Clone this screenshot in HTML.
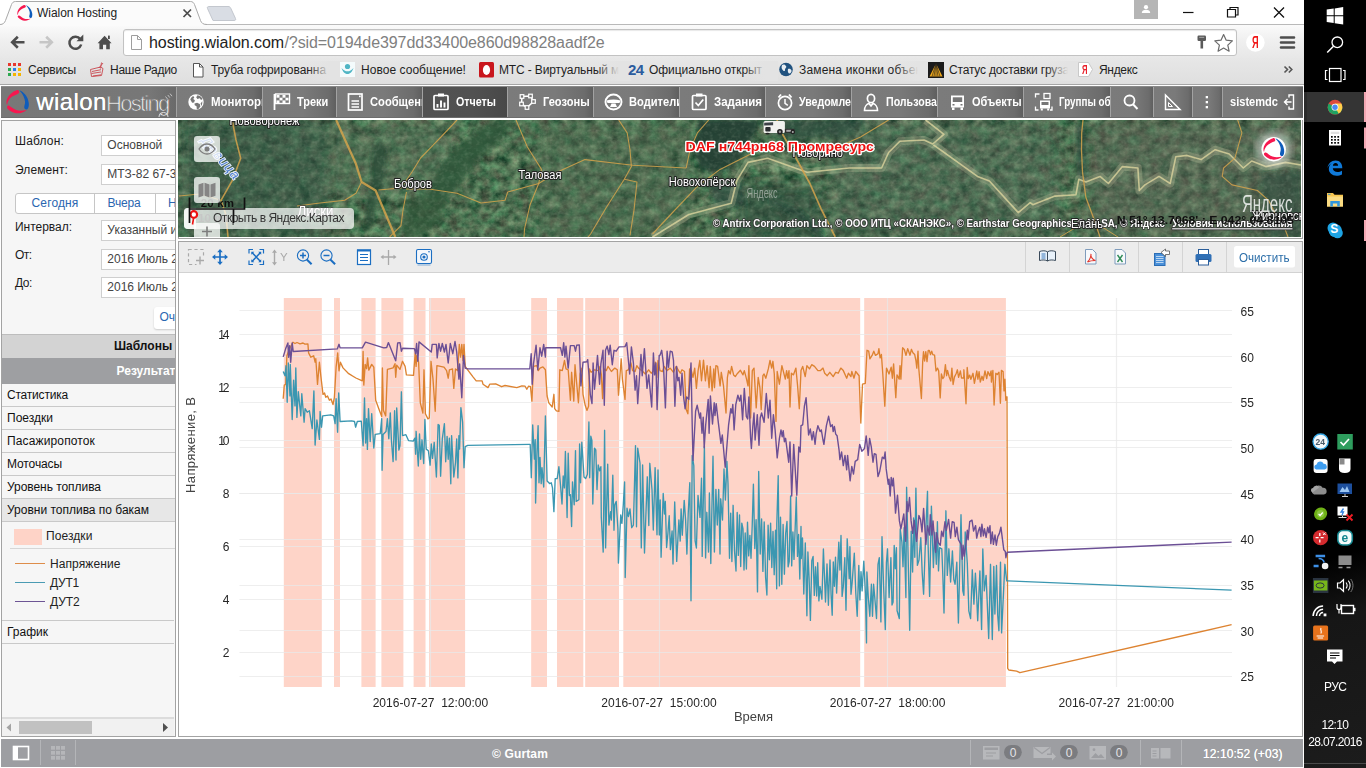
<!DOCTYPE html>
<html lang="ru">
<head>
<meta charset="utf-8">
<title>Wialon Hosting</title>
<style>
*{box-sizing:border-box;margin:0;padding:0}
html,body{width:1366px;height:768px;overflow:hidden;background:#fff}
body{position:relative;font-family:"Liberation Sans",sans-serif;font-size:12px;color:#222}
.a{position:absolute}
.t{position:absolute;white-space:pre}
svg{position:absolute;overflow:visible}

#tabstrip{left:0;top:0;width:1304px;height:25px;background:#fff}
#toolbar{left:0;top:24px;width:1304px;height:35px;background:linear-gradient(#fbfbfb,#f0f0f0 45%,#e7e7e7)}
#bookmarks{left:0;top:58px;width:1304px;height:27px;background:linear-gradient(#e7e7e7,#dfdfdf);border-bottom:1px solid #a6a6a6}
#urlbar{left:123px;top:29px;width:1114px;height:27px;background:#fff;border:1px solid #c2c2c2;border-radius:3px;box-shadow:inset 0 1px 1px #e8e8e8}

#nav{left:1px;top:86px;width:1302px;height:32px;background:#767676;border-top:1px solid #8a8a8a;border-bottom:1px solid #6d6d6d}
.ni{top:87px;height:30px;overflow:hidden;background:linear-gradient(90deg,#7b7b7b,#7a7a7a 55%,#6c6c6c 90%,#5f5f5f);border-left:1px solid #a2a2a2}
.ni.act{background:linear-gradient(90deg,#525252,#515151 60%,#484848)}
.ni .t{color:#fff;font-weight:bold;top:8px;font-size:12px;line-height:15px}
.ni svg{left:0;top:0}

#left{left:1px;top:120px;width:175px;height:617px;background:#f6f6f6;border:1px solid #a3a3a3;overflow:hidden}
#left .inp{position:absolute;left:99px;width:90px;height:21px;background:#fff;border:1px solid #cfcfcf}
#left .row{position:absolute;left:0;width:173px;height:23px;border-bottom:1px solid #c9c9c9}

#mpanel{left:178px;top:120px;width:1125px;height:119px;background:#fff;border:1px solid #a3a3a3;border-top:none}
.mbtn{position:absolute;left:194px;width:26px;height:26px;border-radius:3px;background:rgba(255,255,255,.76)}

#cpanel{left:178px;top:241px;width:1125px;height:496px;background:#fff;border:1px solid #a3a3a3}
#ctool{left:179px;top:242px;width:1123px;height:31px;background:#ececec;border-bottom:1px solid #d2d2d2}

#bbar{left:1px;top:739px;width:1302px;height:28px;background:#9d9ea2}

#taskbar{left:1304px;top:0;width:62px;height:768px;background:linear-gradient(165deg,#000 0,#000 72%,#161616 80%,#1c1c1c 100%)}
</style>
</head>
<body>
<div id="tabstrip" class="a"></div><div id="toolbar" class="a"></div><div id="bookmarks" class="a"></div><div id="urlbar" class="a"></div>
<svg style="left:0;top:0" width="1304" height="26" viewBox="0 0 1304 26"><path d="M213 20.500L207.500 8.500C207 7.300 207.500 6.500 208.800 6.500L228 6.500C229.500 6.500 230.200 7 230.800 8.300L235.500 18.500C236 19.800 235.500 20.500 234 20.500Z" fill="#d9dde4" stroke="#c3c7ce" stroke-width="1"/><path d="M0 24.500L1304 24.500" stroke="#b9b9b9" stroke-width="1" fill="none"/><path d="M0 24.500C3 24.500 4.500 23 5.500 20.500L11.500 4.500C12.300 2.500 13.500 1.500 15.500 1.500L190.500 1.500C192.500 1.500 193.700 2.500 194.500 4.500L200.500 20.500C201.500 23 203 24.500 207 24.500L207 26L0 26Z" fill="#fbfbfb" stroke="none"/><path d="M0 24.500C3 24.500 4.500 23 5.500 20.500L11.500 4.500C12.300 2.500 13.500 1.500 15.500 1.500L190.500 1.500C192.500 1.500 193.700 2.500 194.500 4.500L200.500 20.500C201.500 23 203 24.500 207 24.500" fill="none" stroke="#a9a9a9" stroke-width="1"/><path d="M183.500 9.500l7.500 7.500m0-7.500l-7.500 7.500" stroke="#4a4a4a" stroke-width="1.700" fill="none"/><path d="M1183 12.500h10.500" stroke="#111" stroke-width="1.200" fill="none"/><path d="M1227.500 9.500h8v7.500h-8zM1230 9.500v-2h8v7.500h-2.300" stroke="#111" stroke-width="1.200" fill="none"/><path d="M1274 7.500l10 10m0-10l-10 10" stroke="#111" stroke-width="1.300" fill="none"/><rect x="1134" y="0" width="24" height="19" fill="#b5b5b5"/><circle cx="1146" cy="7.200" r="2.100" fill="#fff"/><path d="M1141.800 13c0-2.300 1.800-3.300 4.200-3.300s4.200 1 4.200 3.300z" fill="#fff"/></svg>
<svg style="left:17px;top:4.5px" width="15.84" height="15.84" viewBox="0 0 24 24"><path d="M11 .15C7 1.200 1.500 5.500.55 11.200C.4 12.500.5 13.800.8 14.800L1.300 14.800C1.600 11 4.500 7.500 7.300 6.200C9 5.300 10.500 4.600 11.500 4.200C13 3.600 13.800 3 13.300 1.600C12.900.5 12 0 11 .15Z" fill="#f7174f"/><path d="M13.600.25C16 1.300 18 2.800 19.300 4.400C21 6.500 22 8.500 22.400 10.100C23 12 23.300 13.500 23.200 14.800C23.200 16.500 22.900 17.600 22.400 18.500C21.900 19.500 21.200 19.900 20.600 19.800C19.300 19.500 18.500 18.500 18.500 17.400C18.500 16.200 19.100 15 19.300 13.800C19.500 12.200 19.300 10.600 18.800 9.100C18.300 7.400 17.600 5.800 16.700 4.400C15.900 3.100 15 2 14.100 1Z" fill="#0f5cbb"/><path d="M1.100 16.900C1.400 16.200 2.300 15.700 3.150 15.900C4.300 16.300 5.200 17.300 6.300 18C7.600 19 9 19.800 10.400 20.300C12 20.900 13.600 21.100 15.100 21.100C17 21.100 19 20.800 20.900 20.300C20 21.300 18.900 21.900 17.700 22.400C16 23.200 14 23.700 12 23.700C10 23.700 8 23.300 6.300 22.400C4.600 21.700 3.200 20.700 2.100 19.500C1.300 18.700.9 17.700 1.100 16.900Z" fill="#f7174f"/></svg>
<span class="t" style="left:37px;top:5px;font-size:12px;line-height:16px;color:#222;letter-spacing:-0.050px;">Wialon Hosting</span>
<svg style="left:0;top:24px" width="1304" height="36" viewBox="0 24 1304 36"><path d="M24.500 42.300H12.500M17.800 36.800L12.200 42.300L17.800 47.800" stroke="#4d4d4d" stroke-width="2.600" fill="none" stroke-linejoin="miter"/><path d="M39.500 42.300H51.500M46.200 36.800L51.800 42.300L46.200 47.800" stroke="#c6c6c6" stroke-width="2.600" fill="none"/><path d="M80.300 39.200A6 6 0 1 0 81.200 44.500" stroke="#4d4d4d" stroke-width="2.500" fill="none"/><path d="M76.500 41.200L83.300 41.200L83.300 34.500Z" fill="#4d4d4d"/><path d="M97.600 43.200L104.600 35.700L111.600 43.200L109.800 43.200L109.800 49.200L106.200 49.200L106.200 44.700L103 44.700L103 49.200L99.400 49.200L99.400 43.200Z" fill="#4d4d4d"/><rect x="108" y="35.600" width="1.800" height="3.400" fill="#4d4d4d"/><path d="M131.500 35.500h6l4 4v10h-10z" fill="#fdfdfd" stroke="#9d9d9d" stroke-width="1"/><path d="M137.500 35.500v4h4" fill="none" stroke="#9d9d9d" stroke-width="1"/><rect x="1197.500" y="35.500" width="8.500" height="5.500" rx="1.200" fill="#5a5a5a"/><rect x="1200.500" y="41" width="2.600" height="7.500" fill="#5a5a5a"/><rect x="1199.200" y="36.800" width="5" height="1.200" fill="#9a9a9a"/><path d="M1223.600 34.500l2.600 5.700 6.200.7-4.600 4.200 1.300 6.100-5.500-3.100-5.500 3.100 1.300-6.100-4.600-4.200 6.200-.7z" fill="#fff" stroke="#6a6a6a" stroke-width="1.200" stroke-linejoin="round"/><circle cx="1255.400" cy="42.500" r="9.300" fill="#fff"/><path d="M1281 37.500h13M1281 42.500h13M1281 47.500h13" stroke="#4d4d4d" stroke-width="2.600" stroke-linecap="round" fill="none"/></svg>
<span class="t" style="left:1252.2px;top:33px;font-size:16px;line-height:19px;color:#f01818;font-weight:bold;transform:scaleX(0.5739);transform-origin:0 0;">Я</span>
<span class="t" style="left:149px;top:32.5px;font-size:16px;line-height:20px;color:#222;letter-spacing:-0.060px;">hosting.wialon.com</span>
<span class="t" style="left:284.5px;top:32.5px;font-size:16px;line-height:20px;color:#808080;letter-spacing:-0.090px;">/?sid=0194de397dd33400e860d98828aadf2e</span>
<span class="t" style="left:28px;top:62px;font-size:12px;line-height:16px;color:#1f1f1f;letter-spacing:-0.246px;">Сервисы</span>
<span class="t" style="left:110px;top:62px;font-size:12px;line-height:16px;color:#1f1f1f;letter-spacing:-0.264px;">Наше Радио</span>
<span class="t" style="left:211px;top:62px;font-size:12px;line-height:16px;color:#1f1f1f;letter-spacing:-0.065px;">Труба гофрированна</span>
<span class="t" style="left:361px;top:62px;font-size:12px;line-height:16px;color:#1f1f1f;letter-spacing:0.039px;">Новое сообщение!</span>
<span class="t" style="left:499px;top:62px;font-size:12px;line-height:16px;color:#1f1f1f;letter-spacing:-0.145px;">МТС - Виртуальный м</span>
<span class="t" style="left:649px;top:62px;font-size:12px;line-height:16px;color:#1f1f1f;letter-spacing:-0.059px;">Официально открыт</span>
<span class="t" style="left:799px;top:62px;font-size:12px;line-height:16px;color:#1f1f1f;letter-spacing:0.172px;">Замена иконки объек</span>
<span class="t" style="left:949px;top:62px;font-size:12px;line-height:16px;color:#1f1f1f;letter-spacing:-0.178px;">Статус доставки груза</span>
<span class="t" style="left:1099px;top:62px;font-size:12px;line-height:16px;color:#1f1f1f;letter-spacing:-0.310px;">Яндекс</span>
<div class="a" style="left:308px;top:61px;width:34px;height:20px;background:linear-gradient(90deg,rgba(227,227,227,0),#e3e3e3 65%)"></div>
<div class="a" style="left:597px;top:61px;width:34px;height:20px;background:linear-gradient(90deg,rgba(227,227,227,0),#e3e3e3 65%)"></div>
<div class="a" style="left:744px;top:61px;width:34px;height:20px;background:linear-gradient(90deg,rgba(227,227,227,0),#e3e3e3 65%)"></div>
<div class="a" style="left:896px;top:61px;width:34px;height:20px;background:linear-gradient(90deg,rgba(227,227,227,0),#e3e3e3 65%)"></div>
<div class="a" style="left:1046px;top:61px;width:34px;height:20px;background:linear-gradient(90deg,rgba(227,227,227,0),#e3e3e3 65%)"></div>
<svg style="left:0;top:58px" width="1304" height="28" viewBox="0 58 1304 28"><rect x="8" y="63" width="3" height="3" fill="#e8372c"/><rect x="13" y="63" width="3" height="3" fill="#e8372c"/><rect x="18" y="63" width="3" height="3" fill="#e8372c"/><rect x="8" y="68" width="3" height="3" fill="#2da94f"/><rect x="13" y="68" width="3" height="3" fill="#2b7de9"/><rect x="18" y="68" width="3" height="3" fill="#f4b400"/><rect x="8" y="73" width="3" height="3" fill="#2da94f"/><rect x="13" y="73" width="3" height="3" fill="#f4b400"/><rect x="18" y="73" width="3" height="3" fill="#f4b400"/><path d="M90.500 69.500l10-2.500 2.500 1.500-1.500 7-10 1zM92 71.500l9-1.800M91.500 73.500l9.500-1.500M93 76l8-1.200M99 68l4-5M101.500 62.500l-1 6" stroke="#c8474e" stroke-width="0.900" fill="none"/><path d="M193.500 63.500h6l3.500 3.500v10h-9.500z" fill="#fff" stroke="#555" stroke-width="1"/><path d="M199.500 63.500v3.500h3.500" fill="none" stroke="#555" stroke-width="1"/><rect x="340" y="62" width="15" height="15" fill="#f4fbfc"/><circle cx="347.500" cy="66.500" r="2.600" fill="#4fb5c4"/><path d="M341.500 68c1.500 4.500 4 6 6 6s4.500-1.500 6-6c-2 2.500-4 3.300-6 3.300s-4-.8-6-3.300z" fill="#4fb5c4"/><rect x="479" y="62" width="15" height="15.500" rx="1.500" fill="#c9161d"/><ellipse cx="486.500" cy="70" rx="3.600" ry="5" fill="#fff"/><circle cx="786" cy="69.500" r="6.800" fill="#21527f"/><path d="M782 65c2-1 3-.5 4 1s-1 2-1 4-2 1-3-1 0-3 0-4zM788 69c1.500-.5 3 0 3.500 1.500s-1.500 3.500-2.500 3-1.500-3-1-4.500z" fill="#e9eef2"/><rect x="928" y="62" width="16" height="16" fill="#1b1b1b"/><path d="M929.500 76.500l6.500-13 6.500 13z" fill="#f0a81c"/><path d="M936 63.500l-4 13M936 63.500l4 13M936 63.500v13M936 63.500l-2 13M936 63.500l2 13" stroke="#1b1b1b" stroke-width="0.600"/><path d="M1078.500 62.500h10l4 7-4 7h-10z" fill="#fff" stroke="#c9c9c9" stroke-width="1"/><path d="M1284.500 66.500l3 3-3 3M1288.800 66.500l3 3-3 3" stroke="#555" stroke-width="1.600" fill="none"/></svg>
<span class="t" style="left:1081.5px;top:61.5px;font-size:13px;line-height:16px;color:#e8202a;font-weight:bold;transform:scaleX(0.5886);transform-origin:0 0;">Я</span>
<span class="t" style="left:628px;top:60.5px;font-size:15px;line-height:18px;color:#2b5c9e;font-weight:bold;letter-spacing:-0.594px;">24</span>
<div id="nav" class="a"></div>
<div class="a" style="left:1px;top:87px;width:175px;height:30px;background:linear-gradient(90deg,#787878,#777 85%,#6a6a6a)"></div>
<svg style="left:5.7px;top:90px" width="23.64" height="23.64" viewBox="0 0 24 24"><path d="M11 .15C7 1.200 1.500 5.500.55 11.200C.4 12.500.5 13.800.8 14.800L1.300 14.800C1.600 11 4.500 7.500 7.300 6.200C9 5.300 10.500 4.600 11.500 4.200C13 3.600 13.800 3 13.300 1.600C12.900.5 12 0 11 .15Z" fill="#f7174f"/><path d="M13.600.25C16 1.300 18 2.800 19.300 4.400C21 6.500 22 8.500 22.400 10.100C23 12 23.300 13.500 23.200 14.800C23.200 16.500 22.900 17.600 22.400 18.500C21.900 19.500 21.200 19.900 20.600 19.800C19.300 19.500 18.500 18.500 18.500 17.400C18.500 16.200 19.100 15 19.300 13.800C19.500 12.200 19.300 10.600 18.800 9.100C18.300 7.400 17.600 5.800 16.700 4.400C15.900 3.100 15 2 14.100 1Z" fill="#0f5cbb"/><path d="M1.100 16.900C1.400 16.200 2.300 15.700 3.150 15.900C4.300 16.300 5.200 17.300 6.300 18C7.600 19 9 19.800 10.400 20.300C12 20.900 13.600 21.100 15.100 21.100C17 21.100 19 20.800 20.900 20.300C20 21.300 18.900 21.900 17.700 22.400C16 23.200 14 23.700 12 23.700C10 23.700 8 23.300 6.300 22.400C4.600 21.700 3.200 20.700 2.100 19.500C1.300 18.700.9 17.700 1.100 16.900Z" fill="#f7174f"/></svg>
<span class="t" style="left:36.3px;top:88.5px;font-size:24px;line-height:26px;color:#fff;letter-spacing:0.409px;text-shadow:0 0 .6px #fff;">wialon</span>
<span class="t" style="left:106px;top:90.5px;font-size:22px;line-height:25px;color:#f4f4f4;letter-spacing:-1.728px;-webkit-text-stroke:.75px #787878;">Hosting</span>
<svg style="left:160px;top:90px" width="16" height="28" viewBox="160 90 16 28"><path d="M165.500 96.500l2 2.500M167.800 95l2 2.600M170 93.600l2 2.600" stroke="#d8d8d8" stroke-width=".8" fill="none"/><path d="M159 117c0-3 2-4.500 4.500-4.500s4.500 1.500 4.500 4.500" stroke="#e0e0e0" stroke-width="1" fill="none"/></svg>
<div class="ni a" style="left:176px;width:86px"><span class="t" style="left:34px;top:8px;font-size:12px;line-height:15px;color:#fff;font-weight:bold;transform:scaleX(0.9550);transform-origin:0 0;">Мониторинг</span><svg width="86" height="30" viewBox="177 87 86 30"><circle cx="196" cy="102" r="7.700" fill="#fff"/><path d="M190.300 99.500c.5-1.500 1.500-2.800 2.800-3.600l1.200 1.300-1 1.700 1.600 1.300-.8 2.200-2 .3zM197.500 95.200c2.300.4 4.200 1.900 5.200 3.900l-1.700 1-1.200-1.800-2.400.6-1.200-1.700zM194.500 103.500l2.600-.8 2.700 1.200.6 2.600-2.200 2.700-1.400-.3-.3-2.600-1.800-1zM202.300 101.200c.2 1.700-.2 3.400-1 4.800l-.7-2.500z" fill="#777"/></svg></div>
<div class="ni a" style="left:262px;width:74px"><span class="t" style="left:34.2px;top:8px;font-size:12px;line-height:15px;color:#fff;font-weight:bold;transform:scaleX(0.9135);transform-origin:0 0;">Треки</span><svg width="86" height="30" viewBox="263 87 86 30"><path d="M274.500 94v16" stroke="#fff" stroke-width="1.800"/><rect x="275.500" y="94" width="14" height="9.500" fill="none" stroke="#fff" stroke-width="1.400"/><rect x="276.5" y="95" width="3" height="2.700" fill="#fff"/><rect x="276.5" y="100.4" width="3" height="2.700" fill="#fff"/><rect x="279.5" y="97.7" width="3" height="2.700" fill="#fff"/><rect x="282.5" y="95" width="3" height="2.700" fill="#fff"/><rect x="282.5" y="100.4" width="3" height="2.700" fill="#fff"/><rect x="285.5" y="97.7" width="3" height="2.700" fill="#fff"/></svg></div>
<div class="ni a" style="left:336px;width:86px"><span class="t" style="left:33.3px;top:8px;font-size:12px;line-height:15px;color:#fff;font-weight:bold;transform:scaleX(0.9300);transform-origin:0 0;">Сообщения</span><svg width="86" height="30" viewBox="337 87 86 30"><rect x="348.500" y="94" width="13.500" height="16" fill="none" stroke="#fff" stroke-width="1.700"/><path d="M351.500 101h7.500M351.500 104h7.500M351.500 107h7.500" stroke="#fff" stroke-width="1.300"/><rect x="359" y="95.500" width="1.700" height="1.700" fill="#fff"/></svg></div>
<div class="ni a act" style="left:422px;width:85px"><span class="t" style="left:33.4px;top:8px;font-size:12px;line-height:15px;color:#fff;font-weight:bold;transform:scaleX(0.8923);transform-origin:0 0;">Отчеты</span><svg width="86" height="30" viewBox="423 87 86 30"><rect x="434" y="95.500" width="14" height="14" rx="1" fill="none" stroke="#fff" stroke-width="1.700"/><rect x="438" y="93.500" width="6" height="3" fill="#fff"/><path d="M437.500 107.500v-3.500M441 107.500v-7M444.500 107.500v-5" stroke="#fff" stroke-width="1.900"/></svg></div>
<div class="ni a" style="left:507px;width:86px"><span class="t" style="left:34.5px;top:8px;font-size:12px;line-height:15px;color:#fff;font-weight:bold;transform:scaleX(0.9222);transform-origin:0 0;">Геозоны</span><svg width="86" height="30" viewBox="508 87 86 30"><path d="M522 96.500l8.500-.5 3 5.500-6.500 6-5.500-3.500z" fill="none" stroke="#fff" stroke-width="1.500"/><rect x="520.2" y="94.7" width="3.600" height="3.600" fill="#767676" stroke="#fff" stroke-width="1.200"/><rect x="528.7" y="94.2" width="3.600" height="3.600" fill="#767676" stroke="#fff" stroke-width="1.200"/><rect x="531.7" y="99.7" width="3.600" height="3.600" fill="#767676" stroke="#fff" stroke-width="1.200"/><rect x="525.2" y="105.7" width="3.600" height="3.600" fill="#767676" stroke="#fff" stroke-width="1.200"/><rect x="519.7" y="102.2" width="3.600" height="3.600" fill="#767676" stroke="#fff" stroke-width="1.200"/></svg></div>
<div class="ni a" style="left:593px;width:86px"><span class="t" style="left:34.8px;top:8px;font-size:12px;line-height:15px;color:#fff;font-weight:bold;transform:scaleX(0.9250);transform-origin:0 0;">Водители</span><svg width="86" height="30" viewBox="594 87 86 30"><ellipse cx="613.500" cy="102" rx="8" ry="7.500" fill="none" stroke="#fff" stroke-width="1.900"/><path d="M606.500 100.500c4.500-1.500 9.500-1.500 14 0l-1 2.500h-12z" fill="#fff"/><path d="M610 107l1.500-3.500h4l1.500 3.500z" fill="#fff"/></svg></div>
<div class="ni a" style="left:679px;width:86px"><span class="t" style="left:34px;top:8px;font-size:12px;line-height:15px;color:#fff;font-weight:bold;transform:scaleX(0.9579);transform-origin:0 0;">Задания</span><svg width="86" height="30" viewBox="680 87 86 30"><rect x="692.500" y="95.500" width="13.500" height="14" rx="1" fill="none" stroke="#fff" stroke-width="1.700"/><rect x="696" y="93.500" width="6.500" height="3" fill="#fff"/><path d="M695.500 102.500l2.800 3 5-6" stroke="#fff" stroke-width="1.700" fill="none"/></svg></div>
<div class="ni a" style="left:765px;width:86px"><span class="t" style="left:33px;top:8px;font-size:12px;line-height:15px;color:#fff;font-weight:bold;transform:scaleX(0.8850);transform-origin:0 0;">Уведомления</span><svg width="86" height="30" viewBox="766 87 86 30"><circle cx="785" cy="103" r="6.600" fill="none" stroke="#fff" stroke-width="1.700"/><path d="M785 99v4.300l2.800 2" stroke="#fff" stroke-width="1.500" fill="none"/><path d="M778.500 97.500l2.500-3M791.500 97.500l-2.500-3" stroke="#fff" stroke-width="1.900" fill="none"/></svg></div>
<div class="ni a" style="left:851px;width:86px"><span class="t" style="left:34px;top:8px;font-size:12px;line-height:15px;color:#fff;font-weight:bold;transform:scaleX(0.8850);transform-origin:0 0;">Пользователи</span><svg width="86" height="30" viewBox="852 87 86 30"><ellipse cx="871" cy="98.500" rx="3.600" ry="4.200" fill="none" stroke="#fff" stroke-width="1.700"/><path d="M864.500 110.500c0-4 2.500-6.500 4.500-7l2 2.500 2-2.500c2 .5 4.500 3 4.500 7z" fill="none" stroke="#fff" stroke-width="1.600"/></svg></div>
<div class="ni a" style="left:937px;width:86px"><span class="t" style="left:34.1px;top:8px;font-size:12px;line-height:15px;color:#fff;font-weight:bold;transform:scaleX(0.9150);transform-origin:0 0;">Объекты</span><svg width="86" height="30" viewBox="938 87 86 30"><path d="M951 95.500h13v12h-13z" fill="#fff"/><rect x="952.800" y="97.300" width="9.400" height="4.700" fill="#767676"/><rect x="952" y="107.500" width="2.500" height="2.500" fill="#fff"/><rect x="960.500" y="107.500" width="2.500" height="2.500" fill="#fff"/><rect x="952.500" y="104" width="2" height="1.500" fill="#767676"/><rect x="960.500" y="104" width="2" height="1.500" fill="#767676"/></svg></div>
<div class="ni a" style="left:1023px;width:87px"><span class="t" style="left:34.5px;top:8px;font-size:12px;line-height:15px;color:#fff;font-weight:bold;transform:scaleX(0.8200);transform-origin:0 0;">Группы объектов</span><svg width="88" height="30" viewBox="1024 87 88 30"><path d="M1040 100.500h10v8h-10z" fill="#fff"/><rect x="1041.500" y="102" width="7" height="3" fill="#767676"/><rect x="1040.800" y="108.500" width="2" height="2" fill="#fff"/><rect x="1047.200" y="108.500" width="2" height="2" fill="#fff"/><rect x="1044" y="93.500" width="6" height="5" fill="none" stroke="#fff" stroke-width="1.300"/><path d="M1035.500 97.500v-3.500h4M1035.500 106.500v3.500h3M1052 106.500v3.500h-2" stroke="#fff" stroke-width="1.300" fill="none"/></svg></div>
<div class="ni a" style="left:1110px;width:43px"><svg width="44" height="30" viewBox="1111 87 44 30"><circle cx="1129.500" cy="100.500" r="5" fill="none" stroke="#fff" stroke-width="1.800"/><path d="M1133 104.300l4.500 4.700" stroke="#fff" stroke-width="2"/></svg></div>
<div class="ni a" style="left:1153px;width:39px"><svg width="40" height="30" viewBox="1154 87 40 30"><path d="M1165.500 95v14.500h14.500z" fill="none" stroke="#fff" stroke-width="1.500"/><path d="M1168.500 102.500v4h4z" fill="none" stroke="#fff" stroke-width="1"/></svg></div>
<div class="ni a" style="left:1192px;width:30px"><svg width="30" height="30" viewBox="1193 87 30 30"><rect x="1205.700" y="96" width="2.300" height="2.300" fill="#fff"/><rect x="1205.700" y="101" width="2.300" height="2.300" fill="#fff"/><rect x="1205.700" y="106" width="2.300" height="2.300" fill="#fff"/></svg></div>
<div class="ni a" style="left:1222px;width:81px"><span class="t" style="left:6.5px;top:8px;font-size:12px;line-height:15px;color:#fff;font-weight:bold;transform:scaleX(0.9225);transform-origin:0 0;">sistemdc</span><svg width="82" height="30" viewBox="1223 87 82 30"><path d="M1289 97.500v-2.500h4.500v14h-4.500v-2.500" fill="none" stroke="#fff" stroke-width="1.400"/><path d="M1291.500 102h-7M1287.500 99l-3 3 3 3" stroke="#fff" stroke-width="1.400" fill="none"/></svg></div>
<div id="left" class="a"><span class="t" style="left:13px;top:13px;font-size:12px;line-height:15px;color:#1a1a1a;letter-spacing:0.174px;">Шаблон:</span><span class="t" style="left:13px;top:42px;font-size:12px;line-height:15px;color:#1a1a1a;letter-spacing:0.088px;">Элемент:</span><span class="t" style="left:13px;top:98.5px;font-size:12px;line-height:15px;color:#1a1a1a;letter-spacing:-0.024px;">Интервал:</span><span class="t" style="left:13px;top:127px;font-size:12px;line-height:15px;color:#1a1a1a;letter-spacing:-0.557px;">От:</span><span class="t" style="left:13px;top:155px;font-size:12px;line-height:15px;color:#1a1a1a;letter-spacing:-0.427px;">До:</span><div class="inp" style="top:13.5px"></div><span class="t" style="left:105.3px;top:16.5px;font-size:12px;line-height:15px;color:#444;transform:scaleX(1.0000);transform-origin:0 0;">Основной</span><div class="inp" style="top:42.5px"></div><span class="t" style="left:105.3px;top:45.5px;font-size:12px;line-height:15px;color:#444;transform:scaleX(1.0000);transform-origin:0 0;">МТЗ-82 67-34</span><div class="inp" style="top:99px"></div><span class="t" style="left:105.3px;top:102px;font-size:12px;line-height:15px;color:#444;transform:scaleX(1.0000);transform-origin:0 0;">Указанный интервал</span><div class="inp" style="top:127.5px"></div><span class="t" style="left:105.3px;top:130.5px;font-size:12px;line-height:15px;color:#444;transform:scaleX(1.0000);transform-origin:0 0;">2016 Июль 27 00:00</span><div class="inp" style="top:155.5px"></div><span class="t" style="left:105.3px;top:158.5px;font-size:12px;line-height:15px;color:#444;transform:scaleX(1.0000);transform-origin:0 0;">2016 Июль 27 23:59</span><div class="a" style="left:13px;top:71.5px;width:180px;height:21px;background:#fff;border:1px solid #c6c6c6;border-radius:3px"></div><div class="a" style="left:91.5px;top:71.5px;width:1px;height:21px;background:#c6c6c6"></div><div class="a" style="left:152.5px;top:71.5px;width:1px;height:21px;background:#c6c6c6"></div><span class="t" style="left:29.5px;top:74.5px;font-size:12px;line-height:15px;color:#2a66b0;letter-spacing:0.143px;">Сегодня</span><span class="t" style="left:105.5px;top:74.5px;font-size:12px;line-height:15px;color:#2a66b0;letter-spacing:-0.178px;">Вчера</span><span class="t" style="left:166px;top:74.5px;font-size:12px;line-height:15px;color:#2a66b0;">Неделя</span><div class="a" style="left:152px;top:185.5px;width:60px;height:22px;background:#fff;border-radius:3px;box-shadow:0 1px 2px rgba(0,0,0,.18)"></div><span class="t" style="left:157.5px;top:189px;font-size:12px;line-height:15px;color:#2a66b0;">Очистить</span><div class="a" style="left:0;top:212.5px;width:173px;height:25px;background:#d3d3d3;border-top:1px solid #bdbdbd"></div><span class="t" style="left:112px;top:218px;font-size:12px;line-height:15px;color:#111;font-weight:bold;">Шаблоны отчетов</span><div class="a" style="left:0;top:237px;width:173px;height:26px;background:#9e9fa2"></div><span class="t" style="left:114.5px;top:243px;font-size:12px;line-height:15px;color:#fff;font-weight:bold;">Результат отчета</span><div class="row" style="top:263px"></div><span class="t" style="left:5px;top:267px;font-size:12px;line-height:15px;color:#111;letter-spacing:-0.203px;">Статистика</span><div class="row" style="top:286px"></div><span class="t" style="left:5px;top:290.05px;font-size:12px;line-height:15px;color:#111;letter-spacing:0.013px;">Поездки</span><div class="row" style="top:309px"></div><span class="t" style="left:5px;top:313.1px;font-size:12px;line-height:15px;color:#111;letter-spacing:0.135px;">Пасажиропоток</span><div class="row" style="top:332px"></div><span class="t" style="left:5px;top:336.15px;font-size:12px;line-height:15px;color:#111;letter-spacing:-0.109px;">Моточасы</span><div class="row" style="top:355px"></div><span class="t" style="left:5px;top:359.2px;font-size:12px;line-height:15px;color:#111;letter-spacing:-0.048px;">Уровень топлива</span><div class="row" style="top:378px;background:#e7e7e7"></div><span class="t" style="left:5px;top:382.25px;font-size:12px;line-height:15px;color:#111;letter-spacing:-0.007px;">Уровни топлива по бакам</span><div class="a" style="left:11.7px;top:408px;width:28.500px;height:15.500px;background:#fed3c7"></div><span class="t" style="left:44px;top:408px;font-size:12px;line-height:15px;color:#222;letter-spacing:0.085px;">Поездки</span><div class="a" style="left:8px;top:426.7px;width:170px;height:1px;background:#d6d6d6"></div><div class="a" style="left:13px;top:441.6px;width:30px;height:1.500px;background:#de8d4a"></div><span class="t" style="left:48px;top:435.8px;font-size:12px;line-height:15px;color:#222;letter-spacing:0.091px;">Напряжение</span><div class="a" style="left:13px;top:460.6px;width:30px;height:1.500px;background:#4a9bb3"></div><span class="t" style="left:48px;top:454.8px;font-size:12px;line-height:15px;color:#222;letter-spacing:-0.223px;">ДУТ1</span><div class="a" style="left:13px;top:479.8px;width:30px;height:1.500px;background:#6d5595"></div><span class="t" style="left:48px;top:474px;font-size:12px;line-height:15px;color:#222;letter-spacing:-0.098px;">ДУТ2</span><div class="a" style="left:0;top:499px;width:172px;height:1px;background:#c9c9c9"></div><div class="a" style="left:0;top:522px;width:172px;height:1px;background:#c9c9c9"></div><span class="t" style="left:5px;top:503.5px;font-size:12px;line-height:15px;color:#111;letter-spacing:0.000px;">График</span><div class="a" style="left:0;top:596px;width:172px;height:19px;background:#f1f1f1;border-top:2px solid #dcdcdc"></div><div class="a" style="left:17px;top:600px;width:73px;height:13px;background:#c1c1c1"></div><svg style="left:0;top:596px" width="172" height="19" viewBox="3 717 172 19"><path d="M12 723.500v8l-4.500-4z" fill="#a3a3a3"/><path d="M164 723v9l5-4.500z" fill="#505050"/></svg></div>
<div id="mpanel" class="a"></div>
<svg style="left:178px;top:120px" width="1123" height="117" viewBox="178 120 1123 117"><defs><filter id="mn" x="0" y="0" width="100%" height="100%" color-interpolation-filters="sRGB"><feTurbulence type="fractalNoise" baseFrequency=".1 .11" numOctaves="4" seed="11"/><feColorMatrix type="matrix" values=".36 .34 0 0 -.06  .5 .12 0 0 .115  .36 .16 0 0 .045  0 0 0 0 1"/></filter><filter id="mn2" x="0" y="0" width="100%" height="100%" color-interpolation-filters="sRGB"><feTurbulence type="fractalNoise" baseFrequency=".22 .25" numOctaves="2" seed="5"/><feColorMatrix type="matrix" values="0 0 0 0 .85  0 0 0 0 .9  0 0 0 0 .8  1.6 0 0 0 -.72"/></filter><filter id="bl4"><feGaussianBlur stdDeviation="4"/></filter><filter id="bl2"><feGaussianBlur stdDeviation="2"/></filter><filter id="bl7"><feGaussianBlur stdDeviation="7"/></filter><clipPath id="mc"><rect x="178" y="120" width="1123" height="117"/></clipPath></defs><g clip-path="url(#mc)"><rect x="178" y="120" width="1123" height="117" fill="#46604b"/><rect x="178" y="120" width="1123" height="117" filter="url(#mn)"/><g filter="url(#bl7)"><rect x="179" y="120" width="150" height="117" fill="#355241" opacity=".55"/><rect x="330" y="125" width="120" height="70" fill="#5b7058" opacity=".35"/><rect x="540" y="120" width="150" height="117" fill="#4d6a4f" opacity=".4"/><rect x="830" y="120" width="230" height="117" fill="#4d6152" opacity=".35"/><rect x="1090" y="120" width="215" height="117" fill="#5a5f54" opacity=".45"/><rect x="740" y="185" width="80" height="55" fill="#2f4c3c" opacity=".6"/></g><g filter="url(#bl2)"><path d="M428 196L436 172L452 152L476 132L498 120L512 120L500 140L478 160L462 182L448 198Z" fill="#2d5639" opacity=".85"/><path d="M405 200L428 192L446 200L440 225L416 237L402 237Z" fill="#2d5639" opacity=".7"/><path d="M700 120L760 120L752 140L738 160L722 172L700 168L694 150Z" fill="#26443a" opacity=".85"/><path d="M760 120L870 120L850 136L800 140L770 134Z" fill="#2a4a3b" opacity=".7"/><path d="M372 150L380 140L388 150L384 175L378 200L372 225L364 232L366 205L372 180Z" fill="#2a4a35" opacity=".75"/><path d="M1076 125L1084 125L1086 180L1078 180Z" fill="#26463a" opacity=".7"/><path d="M1260 175L1301 170L1301 237L1268 237Z" fill="#2c4a3a" opacity=".6"/><path d="M697 120L756 120L750 145L735 165L715 172L698 160Z" fill="#1f3c31" opacity=".55"/><path d="M709 181L742 181L745 205L715 209Z" fill="#24443a" opacity=".6"/><path d="M770 200L800 215L822 237" fill="none" stroke="#23423a" stroke-width="7" opacity=".5"/></g><rect x="178" y="120" width="1123" height="117" filter="url(#mn2)" opacity=".22"/><path d="M652.5 237L689 214.4L731.2 203.2L736.8 180.7L748 162.4L767.7 158.2L807 172.2L849.3 168L881.6 168L888.6 152.5L899.9 141.3L924 140L932.7 144L943.9 134.3L925.6 120" fill="none" stroke="#cfd0a8" stroke-width="8" opacity=".27" stroke-linejoin="round"/><path d="M652.5 237L689 214.4L731.2 203.2L736.8 180.7L748 162.4L767.7 158.2L807 172.2L849.3 168L881.6 168L888.6 152.5L899.9 141.3L924 140L932.7 144L943.9 134.3L925.6 120" fill="none" stroke="#e3d9a2" stroke-width="1.600" opacity=".75" stroke-linejoin="round"/><path d="M933.4 144.8L977.5 176.4L989.4 181L1018.3 212.6L1030.2 202.7L1032.8 204.7L1055 196.1L1076 194.7L1078.8 179.3L1085.9 182L1100 176.4L1108.4 183.5L1122.4 166.6L1137.9 168L1139.3 190.5L1144.9 184.9L1159 176.4L1170.2 183.5L1175.8 156.8L1187.1 155.4L1201.1 159.6L1215.2 149.7L1229.2 154L1243.3 168L1251.7 161L1265.8 166.6L1285.5 162.4L1301 165" fill="none" stroke="#cfd0a8" stroke-width="8" opacity=".27" stroke-linejoin="round"/><path d="M933.4 144.8L977.5 176.4L989.4 181L1018.3 212.6L1030.2 202.7L1032.8 204.7L1055 196.1L1076 194.7L1078.8 179.3L1085.9 182L1100 176.4L1108.4 183.5L1122.4 166.6L1137.9 168L1139.3 190.5L1144.9 184.9L1159 176.4L1170.2 183.5L1175.8 156.8L1187.1 155.4L1201.1 159.6L1215.2 149.7L1229.2 154L1243.3 168L1251.7 161L1265.8 166.6L1285.5 162.4L1301 165" fill="none" stroke="#e3d9a2" stroke-width="1.600" opacity=".75" stroke-linejoin="round"/><path d="M232.2 120L236 140L240.7 158.2L232.2 180.7L221 200.3L226 215L228 237" fill="none" stroke="#d3a34c" stroke-width="1.6" stroke-linejoin="round" opacity=".85"/><path d="M179 196L200 194L221 200.3" fill="none" stroke="#d3a34c" stroke-width="1" stroke-linejoin="round" opacity=".85"/><path d="M336.2 120L346 142L355.9 163.8L361.6 182L375.6 190.5L386 215L395.3 237" fill="none" stroke="#d3a34c" stroke-width="2.2" stroke-linejoin="round" opacity=".85"/><path d="M378.4 190L401 188L412 172L420.6 158L440 138L457 120" fill="none" stroke="#d3a34c" stroke-width="1.1" stroke-linejoin="round" opacity=".85"/><path d="M406 189L429 189L457.1 193.3L481 203L505 200.3L507.7 192L538.7 183.5L556.9 172.2L585 159.6L632.8 165.2L686.2 168" fill="none" stroke="#d3a34c" stroke-width="1.1" stroke-linejoin="round" opacity=".85"/><path d="M516 120L527.4 147L541.5 169.4L538.7 183.5L530 205L524.6 228.5L524 237" fill="none" stroke="#d3a34c" stroke-width="1.1" stroke-linejoin="round" opacity=".85"/><path d="M361.6 182L356 193.3L344.7 200.3L320 203L297 206" fill="none" stroke="#d3a34c" stroke-width="1.1" stroke-linejoin="round" opacity=".85"/><path d="M406.5 192L403 210L401 225.6L389.7 237" fill="none" stroke="#d3a34c" stroke-width="1.1" stroke-linejoin="round" opacity=".85"/><path d="M708.7 120L697.4 132.9L690 150L686.2 168" fill="none" stroke="#d3a34c" stroke-width="1.1" stroke-linejoin="round" opacity=".85"/><path d="M618.7 120L627.2 132.9L630 150L631.4 166.6L624.3 179.3L606 208L590.6 234L588 237" fill="none" stroke="#d3a34c" stroke-width="1.1" stroke-linejoin="round" opacity=".85"/><path d="M624.3 179.3L637 182L634 210L630 235.5" fill="none" stroke="#d3a34c" stroke-width="1.1" stroke-linejoin="round" opacity=".85"/><path d="M652.5 234L672.1 213L697.4 186.3L720 169.4L753.7 152.5L762 147" fill="none" stroke="#d3a34c" stroke-width="1.1" stroke-linejoin="round" opacity=".85"/><path d="M777 120L777.5 121.5" fill="none" stroke="#d3a34c" stroke-width="1.7" stroke-linejoin="round" opacity=".85"/><path d="M782.5 134L797 160L809.9 183.5L821.1 208.8L835.2 237" fill="none" stroke="#d3a34c" stroke-width="1.7" stroke-linejoin="round" opacity=".85"/><path d="M888.6 120L860.5 137L838 147" fill="none" stroke="#d3a34c" stroke-width="1.1" stroke-linejoin="round" opacity=".85"/><path d="M1083 120L1081.7 132.9L1081.5 150L1082.5 172.2L1085.9 197.5L1094.3 220L1100 237" fill="none" stroke="#d3a34c" stroke-width="1.3" stroke-linejoin="round" opacity=".85"/><path d="M1237.7 120L1241.9 132.9L1234.9 158.2L1223.6 168L1222.2 176.4L1232 184.9L1257.4 190.5L1268.6 200.3L1274.2 211.6L1283 224L1288 237" fill="none" stroke="#d3a34c" stroke-width="1.1" stroke-linejoin="round" opacity=".85"/><path d="M1060 237L1075 228L1094.3 222L1110 232L1118 237" fill="none" stroke="#d3a34c" stroke-width="1" stroke-linejoin="round" opacity=".85"/><circle cx="1273.700" cy="149.200" r="17" fill="#fff" opacity=".55" filter="url(#bl4)"/><circle cx="1273.700" cy="149.200" r="12.200" fill="#fff"/><rect x="763.600" y="121" width="21.300" height="12" rx="1.500" fill="#f1f1ee"/><path d="M764.300 122.800l8.800-.5v3l-9 .3z" fill="#3a3f45"/><rect x="765.300" y="127" width="5.300" height="4.400" rx="1" fill="#2a2d30"/><rect x="784.900" y="128.800" width="9.600" height="4" fill="#2b2b2b"/><rect x="786.300" y="129.800" width="5" height="2" fill="#a8a8a8"/><circle cx="779.900" cy="131.800" r="2.800" fill="#222"/><circle cx="779.900" cy="131.800" r="1.200" fill="#999"/><circle cx="792.800" cy="132" r="2.300" fill="#222"/><circle cx="792.800" cy="132" r="1" fill="#aaa"/><ellipse cx="767.500" cy="133.600" rx="2.200" ry=".9" fill="#222"/><text x="229.5" y="125" text-anchor="start" style="font-family:'Liberation Sans',sans-serif;font-size:12px;font-weight:normal;fill:#fff;stroke:#222;stroke-width:2.2;paint-order:stroke;stroke-linejoin:round;" textLength="70" lengthAdjust="spacingAndGlyphs">Нововоронеж</text><text x="393.9" y="188" text-anchor="start" style="font-family:'Liberation Sans',sans-serif;font-size:12px;font-weight:normal;fill:#fff;stroke:#222;stroke-width:2.2;paint-order:stroke;stroke-linejoin:round;" textLength="38" lengthAdjust="spacingAndGlyphs">Бобров</text><text x="518.4" y="178.5" text-anchor="start" style="font-family:'Liberation Sans',sans-serif;font-size:12px;font-weight:normal;fill:#fff;stroke:#222;stroke-width:2.2;paint-order:stroke;stroke-linejoin:round;" textLength="43" lengthAdjust="spacingAndGlyphs">Таловая</text><text x="668.8" y="185.5" text-anchor="start" style="font-family:'Liberation Sans',sans-serif;font-size:12px;font-weight:normal;fill:#fff;stroke:#222;stroke-width:2.2;paint-order:stroke;stroke-linejoin:round;" textLength="66.5" lengthAdjust="spacingAndGlyphs">Новохопёрск</text><text x="792.5" y="156.5" text-anchor="start" style="font-family:'Liberation Sans',sans-serif;font-size:12px;font-weight:normal;fill:#fff;stroke:#222;stroke-width:2.2;paint-order:stroke;stroke-linejoin:round;" textLength="50.5" lengthAdjust="spacingAndGlyphs">Поворино</text><text x="297.5" y="216" text-anchor="start" style="font-family:'Liberation Sans',sans-serif;font-size:15px;font-weight:normal;fill:#fff;stroke:#444;stroke-width:1.5;paint-order:stroke;stroke-linejoin:round;" textLength="36" lengthAdjust="spacingAndGlyphs">Лиски</text><text x="1251.7" y="219.5" text-anchor="start" style="font-family:'Liberation Sans',sans-serif;font-size:12px;font-weight:normal;fill:#fff;stroke:#222;stroke-width:2.2;paint-order:stroke;stroke-linejoin:round;" textLength="52" lengthAdjust="spacingAndGlyphs">Жирновск</text><text transform="translate(201,141) rotate(50)" style="font-family:'Liberation Sans',sans-serif;font-size:13px;font-style:italic;fill:#4f7fcf;stroke:#e8eef8;stroke-width:1.800;paint-order:stroke" textLength="51">Девица</text><text x="746.6" y="198" text-anchor="start" style="font-family:'Liberation Sans',sans-serif;font-size:15px;font-weight:normal;fill:#c9cdc9;stroke:none;stroke-width:0;paint-order:stroke;stroke-linejoin:round;opacity:.6;" textLength="31" lengthAdjust="spacingAndGlyphs">Яндекс</text><text x="1241.9" y="212" text-anchor="start" style="font-family:'Liberation Sans',sans-serif;font-size:24px;font-weight:normal;fill:#fff;stroke:none;stroke-width:0;paint-order:stroke;stroke-linejoin:round;opacity:.8;" textLength="50.5" lengthAdjust="spacingAndGlyphs">Яндекс</text><text x="685.6" y="151" text-anchor="start" style="font-family:'Liberation Sans',sans-serif;font-size:12.5px;font-weight:bold;fill:#ee1111;stroke:#fff;stroke-width:2.4;paint-order:stroke;stroke-linejoin:round;" textLength="188.4" lengthAdjust="spacingAndGlyphs">DAF н744рн68 Промресурс</text><text x="712.9" y="227.3" text-anchor="start" style="font-family:'Liberation Sans',sans-serif;font-size:10.5px;font-weight:bold;fill:#fff;stroke:#333;stroke-width:1.6;paint-order:stroke;stroke-linejoin:round;" textLength="452" lengthAdjust="spacingAndGlyphs">© Antrix Corporation Ltd., © ООО ИТЦ «СКАНЭКС», © Earthstar Geographics, © NASA, © Яндекс</text><text x="1172.2" y="227.3" text-anchor="start" style="font-family:'Liberation Sans',sans-serif;font-size:10.5px;font-weight:bold;fill:#fff;stroke:#333;stroke-width:1.6;paint-order:stroke;stroke-linejoin:round;text-decoration:underline;" textLength="120.3" lengthAdjust="spacingAndGlyphs">Условия использования</text><text x="1071" y="227.5" text-anchor="start" style="font-family:'Liberation Sans',sans-serif;font-size:13px;font-weight:normal;fill:#fff;stroke:#222;stroke-width:2.2;paint-order:stroke;stroke-linejoin:round;" textLength="32" lengthAdjust="spacingAndGlyphs">Елань</text><text x="1116.8" y="223.5" text-anchor="start" style="font-family:'Liberation Sans',sans-serif;font-size:11.5px;font-weight:bold;fill:#111;stroke:none;stroke-width:0;paint-order:stroke;stroke-linejoin:round;" textLength="180" lengthAdjust="spacingAndGlyphs">N 51° 13.7068&#x27; : E 042° 04.8105&#x27;</text></g></svg>
<svg style="left:1262.7px;top:138.2px" width="21.96" height="21.96" viewBox="0 0 24 24"><path d="M11 .15C7 1.200 1.500 5.500.55 11.200C.4 12.500.5 13.800.8 14.800L1.300 14.800C1.600 11 4.500 7.500 7.300 6.200C9 5.300 10.500 4.600 11.500 4.200C13 3.600 13.800 3 13.300 1.600C12.900.5 12 0 11 .15Z" fill="#f7174f"/><path d="M13.600.25C16 1.300 18 2.800 19.300 4.400C21 6.500 22 8.500 22.400 10.100C23 12 23.300 13.500 23.200 14.800C23.200 16.500 22.900 17.600 22.400 18.500C21.900 19.500 21.200 19.900 20.600 19.800C19.300 19.500 18.500 18.500 18.500 17.400C18.500 16.200 19.100 15 19.300 13.800C19.500 12.200 19.300 10.600 18.800 9.100C18.300 7.400 17.600 5.800 16.700 4.400C15.900 3.100 15 2 14.100 1Z" fill="#0f5cbb"/><path d="M1.100 16.900C1.400 16.200 2.300 15.700 3.150 15.900C4.300 16.300 5.200 17.300 6.300 18C7.600 19 9 19.800 10.400 20.300C12 20.900 13.600 21.100 15.100 21.100C17 21.100 19 20.800 20.900 20.300C20 21.300 18.900 21.900 17.700 22.400C16 23.200 14 23.700 12 23.700C10 23.700 8 23.300 6.300 22.400C4.600 21.700 3.200 20.700 2.100 19.500C1.300 18.700.9 17.700 1.100 16.900Z" fill="#f7174f"/></svg>
<span class="t" style="left:200.7px;top:196px;font-size:11.5px;line-height:14px;color:#111;font-weight:bold;letter-spacing:0.178px;">20 km</span>
<span class="t" style="left:198px;top:210.5px;font-size:11.5px;line-height:14px;color:#333;font-weight:bold;letter-spacing:0.116px;">10 mi</span>
<div class="a" style="left:184px;top:207.500px;width:170px;height:21px;border-radius:4px;background:rgba(255,255,255,.72)"></div>
<div class="a" style="left:184px;top:207.500px;width:12px;height:21px;border-radius:4px 0 0 4px;background:rgba(255,255,255,.8)"></div>
<span class="t" style="left:213px;top:211px;font-size:12px;line-height:15px;color:#333;letter-spacing:-0.477px;">Открыть в Яндекс.Картах</span>
<svg style="left:179px;top:120px" width="200" height="117" viewBox="179 120 200 117"><circle cx="193.800" cy="214.500" r="3.300" fill="#fff" stroke="#e11" stroke-width="2.200"/><path d="M193.500 218.500l-1 6" stroke="#e11" stroke-width="1.600"/><path d="M189.500 197.500V209H244.500V197.500M189.500 209V223M233.500 209V223" fill="none" stroke="#111" stroke-width="1.700"/></svg>
<div class="mbtn" style="top:136px"></div><div class="mbtn" style="top:177px"></div><div class="mbtn" style="top:223px;height:14px;border-radius:3px 3px 0 0"></div>
<svg style="left:179px;top:120px" width="200" height="117" viewBox="179 120 200 117"><path d="M199 149c2.500-3.700 5-5 8-5s5.500 1.300 8 5c-2.500 3.700-5 5-8 5s-5.500-1.300-8-5z" fill="none" stroke="#7d7d7d" stroke-width="1.300"/><circle cx="207" cy="149" r="2.500" fill="#7d7d7d"/><path d="M198.500 184.500l5-1.800v13l-5 1.800zM204.500 182.700l5 1.800v13l-5-1.800zM210.500 184.500l5-1.800v13l-5 1.800z" fill="#858585"/><path d="M207 226.500v10M202 231.500h10" stroke="#7d7d7d" stroke-width="1.600"/></svg>
<div id="cpanel" class="a"></div><div id="ctool" class="a"></div>
<svg style="left:178px;top:241px" width="1126" height="34" viewBox="178 241 1126 34"><rect x="188.500" y="249.500" width="15" height="15" fill="none" stroke="#a9a9a9" stroke-width="1.200" stroke-dasharray="3.200 2.700"/><rect x="196.500" y="257" width="9" height="9" fill="#ececec"/><path d="M200 256.500v8M196 260.500h8" stroke="#a9a9a9" stroke-width="1.400"/><path d="M220 251v12M214 257h12" stroke="#1b6ec2" stroke-width="1.700"/><path d="M220 249l2.800 3.300h-5.600zM220 265l2.800-3.300h-5.600zM212 257l3.300-2.800v5.600zM228 257l-3.300-2.800v5.600z" fill="#1b6ec2"/><path d="M249 253.500v-4h4M263.500 253.500v-4h-4M249 260.500v4h4M263.500 260.500v4h-4" fill="none" stroke="#1b6ec2" stroke-width="1.200"/><path d="M252 252.500l8.500 9M260.500 252.500l-8.500 9" stroke="#1b6ec2" stroke-width="1.500"/><path d="M251.300 251.800h3l-3 3zM261.200 251.800h-3l3 3zM251.300 262.200h3l-3-3zM261.200 262.200h-3l3-3z" fill="#1b6ec2"/><path d="M274.500 252v11" stroke="#a9a9a9" stroke-width="1.400"/><path d="M274.500 249.500l2.500 3.300h-5zM274.500 265.500l2.500-3.300h-5z" fill="#a9a9a9"/><circle cx="303" cy="255.500" r="5.600" fill="none" stroke="#1b6ec2" stroke-width="1.100"/><path d="M306.8 259.500l4.800 4.800" stroke="#1b6ec2" stroke-width="2"/><path d="M300 255.500h6" stroke="#1b6ec2" stroke-width="1.500"/><path d="M303 252.500v6" stroke="#1b6ec2" stroke-width="1.500"/><circle cx="326.5" cy="255.500" r="5.600" fill="none" stroke="#1b6ec2" stroke-width="1.100"/><path d="M330.3 259.500l4.800 4.800" stroke="#1b6ec2" stroke-width="2"/><path d="M323.5 255.500h6" stroke="#1b6ec2" stroke-width="1.500"/><rect x="357.500" y="250" width="13" height="14.500" fill="#fff" stroke="#1b6ec2" stroke-width="1.200"/><rect x="357" y="249.500" width="14" height="2" fill="#1b6ec2"/><path d="M360 254.500h8M360 257.500h8M360 260.500h8" stroke="#1b6ec2" stroke-width="1"/><path d="M382.500 257h12M388.500 250v15" stroke="#a9a9a9" stroke-width="1.300"/><path d="M380.500 257l3-2.300v4.600zM396.500 257l-3-2.300v4.600z" fill="#a9a9a9"/><rect x="416.500" y="249.500" width="15" height="14" rx="1.500" fill="#f4f7fb" stroke="#1b6ec2" stroke-width="1.100"/><circle cx="424" cy="257" r="3.300" fill="none" stroke="#1b6ec2" stroke-width="1.100"/><circle cx="424" cy="257" r="1.600" fill="#1b6ec2"/><circle cx="429" cy="251.800" r=".8" fill="#1b6ec2"/><path d="M417.500 265h13" stroke="#1b6ec2" stroke-width="1" opacity=".5"/><path d="M1025.5 242v30" stroke="#d4d4d4" stroke-width="1"/><path d="M1069.5 242v30" stroke="#d4d4d4" stroke-width="1"/><path d="M1138.5 242v30" stroke="#d4d4d4" stroke-width="1"/><path d="M1182.5 242v30" stroke="#d4d4d4" stroke-width="1"/><path d="M1226.5 242v30" stroke="#d4d4d4" stroke-width="1"/><path d="M1039.500 251.500c3-1 6-1 8 .3 2-1.300 5-1.300 8-.3v9c-3-.8-6-.8-8 .5-2-1.300-5-1.300-8-.5z" fill="#e8f1fa" stroke="#3a4a5a" stroke-width="1"/><path d="M1047.500 252v9" stroke="#3a4a5a" stroke-width="1"/><path d="M1041.500 254h4M1041.500 256h4M1041.500 258h4" stroke="#2a6db5" stroke-width=".9"/><path d="M1085.500 249.500h7l3.500 3.500v11h-10.500z" fill="#f7f9fc" stroke="#7f9cbc" stroke-width="1"/><path d="M1087.500 262c2-2 3.500-5 3.500-8-.8 3 2 6 4.500 6.500-3 0-6 .5-8 1.500z" fill="none" stroke="#e2352b" stroke-width="1.100"/><path d="M1115 249.500h7l3.500 3.500v11h-10.500z" fill="#f7f9fc" stroke="#7f9cbc" stroke-width="1"/><path d="M1117.500 255l5 7M1122.500 255l-5 7" stroke="#2e8b57" stroke-width="1.400"/><rect x="1154.500" y="253.500" width="10.500" height="12" fill="#4a90d9" stroke="#2a6db5" stroke-width="1"/><path d="M1156 256.500h7.500M1156 258.500h7.500M1156 260.500h7.500M1156 262.500h7.500" stroke="#d7e8f8" stroke-width=".8"/><path d="M1161 252.500l4.500-3.500v2h4v3.500h-4v2z" fill="#fff" stroke="#555" stroke-width=".8"/><rect x="1198.500" y="249.500" width="10" height="5" fill="#fff" stroke="#2a5d9a" stroke-width="1"/><rect x="1195.500" y="254" width="16" height="8" rx="1.500" fill="#2f6fb5"/><rect x="1198.500" y="259.500" width="10" height="5.500" fill="#fff" stroke="#2a5d9a" stroke-width="1"/><rect x="1234" y="246" width="61" height="21.500" rx="2.500" fill="#fff"/></svg>
<span class="t" style="left:280px;top:251px;font-size:11.5px;line-height:13px;color:#a9a9a9;letter-spacing:-0.172px;">Y</span>
<span class="t" style="left:1239.3px;top:249.5px;font-size:13px;line-height:15px;color:#2a6da8;transform:scaleX(0.8923);transform-origin:0 0;">Очистить</span>
<svg style="left:179px;top:274px" width="1123" height="461" viewBox="179 274 1123 461"><rect x="283.8" y="298" width="38" height="389" fill="#fed4c8"/><rect x="334" y="298" width="6" height="389" fill="#fed4c8"/><rect x="361.4" y="298" width="14.2" height="389" fill="#fed4c8"/><rect x="381.4" y="298" width="22" height="389" fill="#fed4c8"/><rect x="413.6" y="298" width="11.9" height="389" fill="#fed4c8"/><rect x="429.1" y="298" width="36" height="389" fill="#fed4c8"/><rect x="531.2" y="298" width="15.8" height="389" fill="#fed4c8"/><rect x="557" y="298" width="26.3" height="389" fill="#fed4c8"/><rect x="585.2" y="298" width="33.8" height="389" fill="#fed4c8"/><rect x="623.3" y="298" width="236.9" height="389" fill="#fed4c8"/><rect x="864.2" y="298" width="141.7" height="389" fill="#fed4c8"/><path d="M239.500 334.5H1232" stroke="#e8e8e8" stroke-opacity=".75" stroke-width="1.200"/><path d="M239.500 387.5H1232" stroke="#e8e8e8" stroke-opacity=".75" stroke-width="1.200"/><path d="M239.500 440.5H1232" stroke="#e8e8e8" stroke-opacity=".75" stroke-width="1.200"/><path d="M239.500 493.5H1232" stroke="#e8e8e8" stroke-opacity=".75" stroke-width="1.200"/><path d="M239.500 546.5H1232" stroke="#e8e8e8" stroke-opacity=".75" stroke-width="1.200"/><path d="M239.500 599.5H1232" stroke="#e8e8e8" stroke-opacity=".75" stroke-width="1.200"/><path d="M239.500 652.5H1232" stroke="#e8e8e8" stroke-opacity=".75" stroke-width="1.200"/><path d="M239.500 310.5H1232" stroke="#e8e8e8" stroke-opacity=".75" stroke-width="1.200"/><path d="M239.500 356.5H1232" stroke="#e8e8e8" stroke-opacity=".75" stroke-width="1.200"/><path d="M239.500 402.5H1232" stroke="#e8e8e8" stroke-opacity=".75" stroke-width="1.200"/><path d="M239.500 447.5H1232" stroke="#e8e8e8" stroke-opacity=".75" stroke-width="1.200"/><path d="M239.500 493.5H1232" stroke="#e8e8e8" stroke-opacity=".75" stroke-width="1.200"/><path d="M239.500 539.5H1232" stroke="#e8e8e8" stroke-opacity=".75" stroke-width="1.200"/><path d="M239.500 585.5H1232" stroke="#e8e8e8" stroke-opacity=".75" stroke-width="1.200"/><path d="M239.500 630.5H1232" stroke="#e8e8e8" stroke-opacity=".75" stroke-width="1.200"/><path d="M239.500 676.5H1232" stroke="#e8e8e8" stroke-opacity=".75" stroke-width="1.200"/><path d="M430.5 298V687" stroke="#e8e8e8" stroke-opacity=".75" stroke-width="1.200"/><path d="M659.5 298V687" stroke="#e8e8e8" stroke-opacity=".75" stroke-width="1.200"/><path d="M887.5 298V687" stroke="#e8e8e8" stroke-opacity=".75" stroke-width="1.200"/><path d="M1116.5 298V687" stroke="#e8e8e8" stroke-opacity=".75" stroke-width="1.200"/><polyline points="283.2,398.7 284.3,385.1 285.7,384.4 286.9,355.8 289,350 292.9,342.2 295,343.5 297,342.5 300,343.8 303,343 305,344.2 307.9,343.9 308.6,352.9 310.8,357.2 313.7,355.8 315.1,362.2 315.8,358.6 317.5,384.4 319.4,362.2 320.8,375.8 323,394.4 324.5,393 325.8,397.3 327.5,396 329.4,400.2 331,399 333,404.5 334.4,397.3 336.1,367.2 337.7,352.9 339,370.8 340.4,362.2 343,367.9 348.7,373.7 355.9,378 362.3,380.8 363.1,351.5 363.8,385.1 365.2,364.4 366.6,368.7 367.6,357.9 368.8,370.1 371.7,364.4 373.8,367.2 375.7,400.2 378.8,408.8 381.7,416.6 382.4,367.9 383.4,410.2 385.7,415.9 387.4,369.4 393.1,367.9 395,363.7 395.7,377.3 396.7,365.1 400,369.4 402.5,361.3 405.1,366.4 406.4,374.9 413.5,375.4 415.2,352.9 416.1,366.4 416.9,355.4 418.6,362.2 420.3,402.8 422.9,413 424,369.8 425.4,413.8 427.9,418.9 429.3,418 431,361.3 433,379.1 435.2,411.3 436.9,365.6 444,367.2 446.6,370.6 448.2,378.2 449.4,369.8 452.5,368.9 453.8,388.4 455.5,368.9 457.6,370.6 459.3,344.4 460.6,357.1 461.8,344.4 463,360.5 464,344.4 465.2,366.4 467.7,369.8 472.8,376.6 476.2,380.8 482.1,380.8 483,384.2 488,387.6 489.7,384.2 495.7,383.8 501.6,386.7 505,385.5 516.8,387.6 521.9,385.9 525.1,386.2 526.8,389.3 528.5,386.2 530.5,386.7 531.9,401.1 533.5,366.4 536.9,365.6 538.3,370.6 540,368.1 542.9,366.9 545.4,369.8 547.1,396 548.8,402.8 552.2,407 553.9,394.3 554.7,408.7 556.4,410.9 558.9,411.3 559.8,369.8 562.3,370.6 564.5,360.5 566,368.9 568.2,369.8 570.4,400.3 571.6,372.3 573.8,401.1 575,364.7 578.4,402.8 580.1,374 581.8,368.1 583,394.3 585.2,405.3 586.9,410.4 588.6,406.2 589.4,368.9 591.1,372.3 594.5,369.8 598.7,370.6 599.9,366.4 601.3,374 602.6,398.6 603.8,368.9 606.3,370.6 608,366.4 611.4,371.5 614.8,368.1 617.3,369.8 618.5,395.2 621.2,358.8 622.4,379.1 625,399.4 626.3,370.6 628.3,369.8 630.9,363 632.6,370.6 635.1,371.5 636.8,365.6 638.5,368.1 641.9,370.6 645.3,374 648.7,369.8 651.2,373.2 653.7,370.6 655.4,362.2 656.8,377.4 658,360.5 660,370.6 662.5,371.5 664.2,366.4 666.8,370.6 670.2,368.1 673.5,372.3 676.1,366.4 678.6,370.6 680.3,373.2 682,369.8 684.5,371.5 686.2,409.6 687.9,413.8 689.6,368.9 691.3,370.6 693,377.4 694.7,368.1 696.4,388.4 698.1,370.6 699.8,360.5 701.5,380.8 703.5,360.1 705.4,380.8 707.1,365.6 709.1,387.6 710.3,366.4 712.1,390.9 713.8,368.9 714.5,387.6 715.9,365.6 717.6,366.4 720.1,385.9 721.3,372.3 723.5,385.9 726,413 727.4,377.4 728.6,370.6 730.3,374 731.6,366.4 733.6,374.9 735.3,376.6 737,374 740.4,370.3 743,374.9 744.3,370.6 746.3,378.2 748,385.9 748.9,365.6 750.6,418 752.3,370.6 754,368.1 756.2,407.9 758.2,377.4 759.9,387.6 761.2,409.6 762.9,375.7 764.1,374 765.8,378.2 768.3,368.9 770,360.5 771.7,368.1 772.9,361.3 774.3,374 776,421.4 777.2,371.5 779.4,384.2 781.9,365.6 785.3,379.1 786.6,370.6 787.8,378.2 789,370.6 790,407 791.4,373.2 793.4,374.9 795.9,368.1 797.6,385.9 799.3,408.7 801,370.6 802.7,366.4 805.2,376.6 806.9,365.6 809.5,368.9 811.7,364.7 814.5,366.4 817.9,370.6 820.5,370.6 823,368.1 824.7,373.2 827.2,375.7 829.8,372.3 833.2,376.6 835.7,372.3 838.2,373.2 840.8,368.1 843.3,370.6 846.7,378.2 848.4,373.2 850.9,376.6 851.8,371.5 854,378.2 855.7,371.5 857.7,374 859.1,375.7 860.8,423.1 862.5,384.2 865.3,383.3 867,350.3 868.7,351.2 869.9,358.8 872.1,355.4 873.8,351.2 875.5,355.4 878,353.7 878.9,348.6 880.1,357.9 881.4,354.5 882.8,374 884.8,406.2 886.5,368.1 889,374 891.2,367.2 892.4,378.2 893.6,363.9 895.8,397.7 897,374.9 899.2,379.1 900,365.6 900.9,379.1 902.6,347.8 904.3,349.5 906,355.4 907.7,348.6 910,355.2 911.4,349.3 912.9,352.8 914.7,354.6 915.9,360.5 916.8,368.1 918,351.1 918.8,368.7 921.4,398.5 922.7,361.6 923.5,351.7 924.6,361 925.8,351.7 927,361.6 928.2,350.5 929.3,350.5 930.5,354.6 931.7,351.1 932.8,354.6 934.6,355.2 936,371 937.5,368.1 938.7,371 940.2,397.9 941.4,373.9 942.8,378.6 944,376.9 945.4,364.6 946.6,375.7 947.5,370.4 949.2,376.9 950.8,381 951.9,368.1 953.1,384.5 954.5,376.9 956.3,373.3 957.4,369.8 958.6,377.4 960.4,371 961.5,378 963.7,378 963.9,369.8 966,403.8 967.2,367.5 968.3,378.6 969.7,375.1 970.9,379.2 973,373.3 974.4,383.3 976.8,371 977.9,379.2 979.1,371.6 980.3,382.1 982,376.3 983.2,380.4 985,371 986.7,378.6 987.9,371.6 989.7,375.7 991.1,371 991.4,382.1 992.9,370.4 994.1,405 995.8,373.3 997.3,374.5 999,372.2 1000.4,403.2 1001.4,370.4 1003.1,371.6 1004,390.9 1004.9,379.2 1005.8,400.3 1007,396.8 1007.7,668.3 1008.8,670 1016.6,671.1 1019.9,672.7 1231.6,624.7" fill="none" stroke="#dd8331" stroke-width="1.350" stroke-linejoin="round"/><polyline points="283.2,371.5 285,375.8 286,365.8 287.2,402.3 288.3,363 290,395.9 290.3,364.4 292.2,419.5 293.6,380.1 295,405.9 295.8,367.9 296.9,417.4 298.3,391.6 300.8,415.9 301.8,393.7 304.1,422.2 305.1,408.6 307.2,412.2 309.4,410.7 312.2,428.6 313.9,390.9 315.1,445.1 316.9,420 319.4,439.4 320.1,411.5 321.5,427.2 322.7,415.8 330.8,414.8 333.7,415.8 335.1,423.6 336.1,398.7 337.6,432.2 338.7,393 340.1,421.5 351.6,420.8 354.5,421.5 355.6,427.2 357.3,421.5 361.3,421.2 363.1,445.8 364.5,398 365.6,443 366.6,418.6 367.4,449.4 368.5,408.6 370.2,441.5 371.7,413.6 373.8,448 375.2,434.4 380.2,433.7 381.7,418.6 382.1,470.2 383.1,434.4 386,431.5 387.4,418.6 388.8,438.7 390.3,412.9 391.4,440.1 393.1,461.6 394.6,410.7 396,460.1 396.7,407.9 398.9,450.1 400,445.7 401.4,391.8 402.5,435.6 405.9,434.7 408.5,440.6 413.2,441.1 414.9,438.1 415.6,454.2 416.1,431.3 418.3,466 419.5,433.9 420.7,459.3 422,439.8 423.7,463.5 424.9,419.5 426.2,449.1 428.4,450.8 430.1,465.2 431.3,444 432.5,458.4 434.2,442.3 436.4,477 438.1,424.5 439.3,425.4 440.6,476.2 442.3,438.9 444.4,423.7 445.7,461.8 447.1,436.4 448.2,459.3 449.4,438.1 450.8,483.8 451.6,435.6 453.8,477 455.5,462.6 456.7,438.9 457.9,477.9 458.9,435.6 459.6,449.1 460.9,407.6 462.6,422 464,467.7 465.2,446.6 467.7,445.4 529.5,444.4 530.2,444.4 531.3,477.7 532.7,424.9 534.4,459.1 535.2,439.6 535.6,503.1 536.9,454 538.1,425.6 539,482.8 540,457.4 541.2,483.6 542,467.6 543.7,487 545.4,415.9 547.1,481.1 549.6,483.6 551.3,482.8 552.5,487.9 553.9,511.6 555.2,478.6 557.2,478.6 558.9,466.7 560.6,486.2 562,504 563.2,476 564.4,487.9 565.4,451.5 567.1,517.5 568.2,453.2 569.4,495.5 570.4,494.6 571.6,526.5 572.5,481.9 574.2,504.8 575.5,450.6 576.2,501.4 578.9,499.7 579.6,443.9 580.6,482.8 581.8,442.2 584,476.9 585.7,478.6 587.4,474.3 588.9,421.9 589.7,477.7 590.8,436.2 591.9,440.5 592.8,504 594.5,448.1 595.8,449.8 597,489.6 598.2,465 599.6,470.9 600.9,466.7 601.3,517.5 603.2,552.1 604.6,430.3 605.6,547.9 607.7,464.2 608.9,525.1 610.6,511.6 611.4,520 612.8,475.2 614,530.2 614.8,504.8 616.2,501.4 617.9,528.5 618.4,563.1 620.7,515 621.9,523.4 623.3,504.8 624.6,481.9 625.2,577.5 627,508.2 628.4,516.6 630,509 631.7,527.7 633.4,525.1 635.5,445.6 636.5,526.8 637.7,448.1 640,463 641.3,547.9 642.6,465 644.5,553 647.3,476.8 648.8,525.5 649.8,463.3 652,489.6 653.3,530 655.1,467.6 657,534.8 658,470 659.3,535 660.2,500 661.1,557.2 663.2,493.5 664.5,514 665.3,501.3 666.6,547.5 667.9,533.5 669.2,515.7 670.4,549.6 672.1,530.9 673,564 674.7,502 676.7,561.4 678.9,519.9 680.2,541.1 681.1,508.9 682.3,535.2 684.2,500.4 685.6,519.9 686.9,554.1 688.2,514 689.8,482.6 691,600.8 692.2,455.4 693.8,465.6 695.1,540.8 696.4,548 698,495.4 700,517.4 701.5,478.2 702.2,556.4 704.4,446.1 705.6,557.9 706.8,512.3 708.5,552.1 709.4,492.9 710.8,563.5 711.9,508.9 713,456.2 714.4,552.1 715.9,489.4 717.3,525 718.7,489.5 720,554 720.7,498.8 722.5,520 724,468.9 725.4,500 726.9,461.3 728,483.5 729.5,558.3 730.7,513.1 731.9,561.6 733.1,505.3 734.5,550.8 736,571 737.2,512.4 738.3,555.4 739.5,514.9 740.7,566.6 741.8,523.1 743,529 744,570 745.2,532.9 746.4,569.1 747.5,522.2 748.7,555.9 749.9,535.4 751,558.3 752.2,525.7 753.4,484.2 754.8,548.6 756.1,519.6 757.5,591.9 758.7,471.5 760.2,554 761.6,518.9 762.9,571.4 764.2,522 765.6,577.5 766.9,595 768.1,525.2 769.4,559.8 770.6,523.1 771.8,567.6 773,531.5 774.2,574.7 775.5,530.1 776.7,588.8 776.8,524 778.2,475.7 779.4,585.9 780.5,517.2 781.8,584.3 783.1,524.5 784.4,574.2 785.7,533.2 787,521.4 788.1,566.8 789.2,561.7 790.6,496 791.7,565.9 792.9,532 794,559.4 795.2,527 796.3,496.9 797.5,556.4 798.6,534.5 799.8,579.1 801,526.5 801.3,558.5 802.5,537.9 803.8,594 805.3,543 806.9,615.8 807.9,552 809.1,578.2 810.4,620.4 811.8,560.6 813.1,556.5 814.3,595.4 815.5,566.8 816.7,596 817.7,562.7 818.9,600.9 820,586.4 821.9,599.2 823.4,549 825.5,602 827,564 828.4,605.3 830,560 831.1,594.7 832.2,615.2 833.3,562 834.4,586.3 835.5,557.1 836.6,593.1 838.8,542.1 839.9,570 841,535.5 842.1,596.4 843.3,586.4 844.8,557.6 846,610.2 847.2,538.8 849.2,578.7 849.9,546.6 851,594.3 852.1,583.1 854.3,553.2 855.8,593.2 857.2,616.3 858.8,565.4 859.9,599.9 861,571.6 862.1,590.9 863.8,561.1 865.4,593.1 866.5,642.9 866.9,572 868.3,597 869.8,616.3 871.4,584.2 872.5,616.3 873.6,584.2 875,600.2 876.5,618.5 878,564.3 879.3,557.6 880.9,621.9 882,536.6 883.6,586.4 885.3,629.6 886.4,562.9 887.5,548.8 889.1,597.5 890.9,557.6 892,605 893.1,601.9 894.2,545.5 895.3,568.7 896.4,547.7 897.1,610.8 899.3,618.5 900.2,528.9 901.9,542.1 903,566.7 904.1,527.8 905.9,597.5 906.6,487.3 908.2,560 909.7,630.3 911.2,531.1 912.6,572 913.6,518 914.8,557.3 915.9,488.1 917.4,565.4 919,560 920.8,537.7 922.2,572.6 923.6,594.2 925.8,531.1 927.5,491.3 928.1,544.4 929.6,596.4 931.4,506.1 933.4,567.6 934.8,532.3 936.3,564.3 937.4,521.7 938.5,570.9 939.6,547.7 941.8,548.8 942.9,577.2 944,613 945.9,510.8 947.3,575.4 948.9,548.8 950.6,582 952.4,551 953.8,579.5 955.1,584.2 956.8,562.1 958.4,623 959.9,558.8 961,514.7 962.8,590.9 963.9,595.3 965.2,531.9 967.3,563.2 968.8,610.8 970.6,618.5 972.3,569.8 973.9,604.1 975.4,573.1 976.5,592.5 977.7,620.8 979.9,570.9 981.6,629.6 982.8,549 984.3,590.9 986.1,575.4 987.2,601.9 988.7,638.5 990.5,564.3 992.3,639.6 993.8,566.5 994.9,614.1 996.5,565.4 997.7,615.1 998.9,630.7 1000.5,562.1 1001.6,632.9 1003.8,586.4 1004.9,564.3 1006.7,580.9 1007.7,580.9 1231.6,590.1" fill="none" stroke="#3b97b1" stroke-width="1.350" stroke-linejoin="round"/><polyline points="283.2,356.9 285.7,348.6 287.9,342.9 288.6,357.2 289.7,345.8 290.7,362.2 292.2,342.9 293.2,351.5 337.3,348.9 339,344.3 340.1,347.9 362.3,347.9 365.5,342.2 383.8,347.9 386.7,347.5 388.4,342.6 395.7,360.8 397.7,342.9 400,342.7 401.4,351.2 402.5,348.3 414.4,348.6 415.6,353.7 416.6,343.5 417.8,361.3 419,341.9 431.3,352 432.2,344.4 436.4,344.4 437.2,357.9 438.9,343.5 440.6,351.2 442.3,343.5 444.4,352 446,344.4 448.2,363 450.3,343.5 452.8,353.7 455,341.5 456.7,352 458.9,379.1 459.6,363.9 461.8,397.7 463.5,355.4 465.2,368.1 467.7,368.9 529.8,368.9 531.2,353.7 532.2,384.2 533.5,363.9 536.1,345.2 537.8,369.8 540,347.8 541.7,356.2 543.7,344.4 545.4,357.1 545.7,347.8 560.6,347.8 562.3,355.4 563.7,342.7 564.9,357.1 566,346.1 568.2,368.1 570.4,345.6 574.2,345.6 575.5,351.2 576.7,345.2 579.3,344.9 580.9,385.9 583,362.2 586.9,361.8 587.7,359.6 589.1,375.7 590.3,394.3 592,403.6 593.1,363 594.5,389.3 595.8,375.7 597.5,355.4 599.6,384.2 600.9,363.9 603,350.3 604.3,405.3 605.5,350.3 607.2,346.1 608.9,354.5 610.2,345.2 612.3,364.7 614,350.3 616.2,351.2 619,346.9 625,346.6 626.7,342.7 629.7,374 631.4,346.9 633.4,363 635.1,390.1 636.5,375.7 637.7,403.6 641,354.5 642.2,375.7 644.4,348.6 647,388.4 648.7,374.9 651.7,407 653.4,352.9 654.6,374.9 655.9,363 657.1,409.6 659.2,355.4 660,355.4 661.7,350.3 663.4,363.9 665.4,407.9 667.1,351.2 668.5,367.2 670.2,351.2 672.2,352 673.5,360.5 674.9,406.2 676.6,366.4 677.8,380.8 679,377.4 680.7,395.2 682,373.2 683.7,397.7 685.1,408.7 686.7,396.9 688.8,399.4 691,363 692.2,424.8 693,460.5 695.6,411.3 697.2,405.3 699.8,418 700.6,413 702,433.3 703.2,417.2 704.2,447.8 705.7,424.8 708.2,399.4 709.1,433.3 710.4,396 712.5,424 714.2,402.8 715,415.5 716.2,403.6 718.4,423.1 720.9,443.4 722.3,435 725.2,467.2 728.6,424.8 730.8,408.7 731.9,413 732.8,404.5 734.1,429.9 735.8,404.5 737.9,395.2 739.6,401.1 740.9,395.2 742.6,419.7 744.3,388.4 746.3,416.3 747.7,418.9 748.9,396.9 750.6,438.3 751.4,448.5 752.8,426.5 754,413 755.1,440 757.3,414.6 759,445.2 760.2,418 761.6,413 764.1,422.3 766.3,393.5 768.3,418 770,400.3 771.7,438.3 773.4,414.6 775.1,429.9 777.2,457.9 779.4,438.3 781,429.9 782.2,436.7 783.2,430.7 784.4,441.7 785.6,438.3 788.7,462.2 790,441.9 791.7,496 793.7,444.4 796.8,495.2 798.8,446.9 800.2,452 801,425.7 802.7,424.8 804.4,406.2 806.1,397.7 806.9,409.6 808.6,435 810.3,429 812,440 813.4,431.6 815.1,444.3 816.2,433.3 817.9,425.7 820.1,431.6 821.3,429.9 823,440 823.9,444.3 826.4,425.7 828.6,416.3 830.6,426.5 832.3,424.8 833.2,431.6 834.4,426.5 835.7,434.1 837.1,435.8 839.1,450.3 839.9,459.6 841.6,452 843.3,465.6 845,455.4 846.7,469.8 847.6,455.4 850.1,480.8 851.8,466.4 853.5,474 855.2,461.3 857.7,459.6 859.7,444.4 861.9,451.2 864.5,448.6 866.2,435.9 868.2,455.4 869.6,438.5 871.3,446.9 873,462.2 874.3,453.7 876,454.5 878,476.6 879.7,471.5 882.3,457.1 884,458.8 885.1,452 886.2,468.9 888.2,484.2 889,479.1 890.2,496 891.2,477.4 892.4,485.9 893.3,478.2 894.7,496.7 895.5,513.1 897.5,495.2 899.4,520.9 900.9,528.8 903.8,513.9 905.6,541.3 906.9,501.4 908,511.6 909.5,497.5 911.1,520.9 912.7,533.4 914.2,520.2 916.6,541.3 918.9,515.5 920.5,519.4 922,531.9 923.6,508.4 925.9,544.4 927.5,525.6 929.4,535 930.3,514.7 931.9,535 933,520.9 934.5,539.7 935.6,552.2 936.6,532.7 938.4,542.8 940.3,545.2 941.6,531.1 943.1,536.6 945,521.7 946.3,530.3 948.6,519.4 950.6,538.1 952.2,521.7 954.1,522.5 955.3,536.6 956.9,527.2 958.4,539.7 961.1,544.4 962.2,559.2 963.1,545.2 964.2,556.1 965.8,545.2 967.3,530.3 968.1,539.7 969.7,521.7 972,520.2 973.6,531.1 975.6,525.6 976.7,538.1 978.3,531.1 979.8,527.2 980.9,536.6 981.9,524.1 983.4,535.8 984.5,528.8 986.1,537.3 987.7,527.2 988.8,532.7 990,525.6 990.8,543.6 992.3,531.9 993.4,544.4 995,535 996.3,545.2 997.8,536.6 999.4,533.4 1000.9,527.2 1002.5,539.7 1003.8,549.8 1005.3,551.4 1005.9,557.7 1007.2,552.2 1231.6,542.1" fill="none" stroke="#6b4f95" stroke-width="1.400" stroke-linejoin="round"/><text x="229.500" y="339.1" text-anchor="end" textLength="11.300" lengthAdjust="spacing" style="font-family:'Liberation Sans',sans-serif;font-size:12px;fill:#262626">14</text><text x="229.500" y="392.15" text-anchor="end" textLength="11.300" lengthAdjust="spacing" style="font-family:'Liberation Sans',sans-serif;font-size:12px;fill:#262626">12</text><text x="229.500" y="445.2" text-anchor="end" textLength="11.300" lengthAdjust="spacing" style="font-family:'Liberation Sans',sans-serif;font-size:12px;fill:#262626">10</text><text x="229.500" y="498.25" text-anchor="end" style="font-family:'Liberation Sans',sans-serif;font-size:12px;fill:#262626">8</text><text x="229.500" y="551.3" text-anchor="end" style="font-family:'Liberation Sans',sans-serif;font-size:12px;fill:#262626">6</text><text x="229.500" y="604.35" text-anchor="end" style="font-family:'Liberation Sans',sans-serif;font-size:12px;fill:#262626">4</text><text x="229.500" y="657.4" text-anchor="end" style="font-family:'Liberation Sans',sans-serif;font-size:12px;fill:#262626">2</text><text x="1240.500" y="315.8" style="font-family:'Liberation Sans',sans-serif;font-size:12px;fill:#262626">65</text><text x="1240.500" y="361.5" style="font-family:'Liberation Sans',sans-serif;font-size:12px;fill:#262626">60</text><text x="1240.500" y="407.2" style="font-family:'Liberation Sans',sans-serif;font-size:12px;fill:#262626">55</text><text x="1240.500" y="452.9" style="font-family:'Liberation Sans',sans-serif;font-size:12px;fill:#262626">50</text><text x="1240.500" y="498.6" style="font-family:'Liberation Sans',sans-serif;font-size:12px;fill:#262626">45</text><text x="1240.500" y="544.3" style="font-family:'Liberation Sans',sans-serif;font-size:12px;fill:#262626">40</text><text x="1240.500" y="590" style="font-family:'Liberation Sans',sans-serif;font-size:12px;fill:#262626">35</text><text x="1240.500" y="635.7" style="font-family:'Liberation Sans',sans-serif;font-size:12px;fill:#262626">30</text><text x="1240.500" y="681.4" style="font-family:'Liberation Sans',sans-serif;font-size:12px;fill:#262626">25</text><text x="430.4" y="707" text-anchor="middle" style="font-family:'Liberation Sans',sans-serif;font-size:12px;fill:#262626;white-space:pre" xml:space="preserve" textLength="115.500" lengthAdjust="spacing">2016-07-27  12:00:00</text><text x="659" y="707" text-anchor="middle" style="font-family:'Liberation Sans',sans-serif;font-size:12px;fill:#262626;white-space:pre" xml:space="preserve" textLength="115.500" lengthAdjust="spacing">2016-07-27  15:00:00</text><text x="887.6" y="707" text-anchor="middle" style="font-family:'Liberation Sans',sans-serif;font-size:12px;fill:#262626;white-space:pre" xml:space="preserve" textLength="115.500" lengthAdjust="spacing">2016-07-27  18:00:00</text><text x="1116.2" y="707" text-anchor="middle" style="font-family:'Liberation Sans',sans-serif;font-size:12px;fill:#262626;white-space:pre" xml:space="preserve" textLength="115.500" lengthAdjust="spacing">2016-07-27  21:00:00</text><text x="753.500" y="721" text-anchor="middle" style="font-family:'Liberation Sans',sans-serif;font-size:12px;fill:#262626;font-size:13px;fill:#444">Время</text><text transform="translate(194.500,445) rotate(-90)" text-anchor="middle" style="font-family:'Liberation Sans',sans-serif;font-size:12px;fill:#262626;font-size:13px;fill:#444" textLength="96" lengthAdjust="spacing">Напряжение, В</text></svg>
<div id="bbar" class="a"></div>
<svg style="left:0;top:738px" width="1304" height="30" viewBox="0 738 1304 30"><path d="M40.5 740v25" stroke="#b4b5b8" stroke-width="1"/><path d="M75.5 740v25" stroke="#b4b5b8" stroke-width="1"/><path d="M970.5 740v25" stroke="#b4b5b8" stroke-width="1"/><path d="M1140.5 740v25" stroke="#b4b5b8" stroke-width="1"/><path d="M1181.5 740v25" stroke="#b4b5b8" stroke-width="1"/><rect x="13.500" y="746.500" width="15" height="13" fill="#9d9ea2" stroke="#fff" stroke-width="1.600"/><rect x="13" y="746" width="5" height="14" fill="#fff"/><rect x="51" y="746" width="4" height="3.700" fill="#b5b6b9"/><rect x="51" y="751" width="4" height="3.700" fill="#b5b6b9"/><rect x="51" y="756" width="4" height="3.700" fill="#b5b6b9"/><rect x="56" y="746" width="4" height="3.700" fill="#b5b6b9"/><rect x="56" y="751" width="4" height="3.700" fill="#b5b6b9"/><rect x="56" y="756" width="4" height="3.700" fill="#b5b6b9"/><rect x="61" y="746" width="4" height="3.700" fill="#b5b6b9"/><rect x="61" y="751" width="4" height="3.700" fill="#b5b6b9"/><rect x="61" y="756" width="4" height="3.700" fill="#b5b6b9"/><rect x="983" y="746" width="16.500" height="13.500" fill="#b7b8bb"/><rect x="984.500" y="747.500" width="13.500" height="2.500" fill="#9d9ea2"/><path d="M986 753h10M986 756h7" stroke="#9d9ea2" stroke-width="1.200"/><path d="M1033.500 747h17v6.500h-3.500v4.500h-13.500z" fill="#b7b8bb"/><path d="M1034 747.500l8 6 8-6" stroke="#9d9ea2" stroke-width="1.200" fill="none"/><path d="M1046 755h6v-2.500l4 4-4 4v-2.500h-6z" fill="#b7b8bb"/><rect x="1089.500" y="746" width="16.500" height="13.500" fill="#b7b8bb"/><path d="M1091 758l4.500-5 3 3 2.500-2 3.500 4z" fill="#9d9ea2"/><circle cx="1094" cy="749.700" r="1.400" fill="#9d9ea2"/><rect x="1004" y="745" width="17.800" height="14.500" rx="7.200" fill="#7b7c80"/><rect x="1060" y="745" width="17.800" height="14.500" rx="7.200" fill="#7b7c80"/><rect x="1110" y="745" width="17.800" height="14.500" rx="7.200" fill="#7b7c80"/><rect x="1151" y="748" width="8" height="10.500" fill="#b7b8bb"/><rect x="1160.500" y="748" width="10" height="10.500" fill="#b7b8bb"/><path d="M1152.500 751h4M1152.500 753.500h4M1152.500 756h4" stroke="#9d9ea2" stroke-width="1"/></svg>
<span class="t" style="left:1009.7px;top:745.5px;font-size:12px;line-height:14px;color:#e4e4e6;letter-spacing:-0.188px;">0</span>
<span class="t" style="left:1065.7px;top:745.5px;font-size:12px;line-height:14px;color:#e4e4e6;letter-spacing:-0.188px;">0</span>
<span class="t" style="left:1115.7px;top:745.5px;font-size:12px;line-height:14px;color:#e4e4e6;letter-spacing:-0.188px;">0</span>
<span class="t" style="left:492px;top:746.5px;font-size:12px;line-height:15px;color:#fff;font-weight:bold;letter-spacing:0.143px;">© Gurtam</span>
<span class="t" style="left:1203px;top:746.5px;font-size:12px;line-height:15px;color:#fff;letter-spacing:0.078px;text-shadow:0 0 .5px #fff;">12:10:52 (+03)</span>
<div id="taskbar" class="a"></div>
<svg style="left:1304px;top:0" width="62" height="768" viewBox="1304 0 62 768"><rect x="1304" y="92" width="62" height="30" fill="#343434"/><rect x="1304" y="92" width="3" height="30" fill="#2b2b2b"/><rect x="1364" y="92" width="2" height="30" fill="#f3a7b3"/><rect x="1364" y="127.500" width="2" height="21" fill="#f3a7b3"/><rect x="1364" y="220" width="2" height="21" fill="#f3a7b3"/><path d="M1326.700 9.300l7-1v6.700h-7zM1334.700 8.100l8.500-1.300v8.200h-8.500zM1326.700 16h7v6.700l-7-1zM1334.700 16h8.500v8.200l-8.500-1.300z" fill="#fff" transform="translate(0,.3)"/><circle cx="1337.300" cy="42.300" r="5.300" fill="none" stroke="#fff" stroke-width="1.300"/><path d="M1333.500 46.300l-6.300 6.200" stroke="#fff" stroke-width="1.500"/><rect x="1329.500" y="68.500" width="11.500" height="13" fill="none" stroke="#fff" stroke-width="1.200"/><path d="M1327.500 70.500h-2v9h2M1343 70.500h2v9h-2" fill="none" stroke="#fff" stroke-width="1.200"/><circle cx="1335" cy="107.200" r="7.400" fill="#dd4b3e"/><path d="M1335 107.200L1328.600 103.500A7.400 7.400 0 0 0 1331.300 113.600z" fill="#1da462"/><path d="M1335 107.200L1331.300 113.600A7.400 7.400 0 0 0 1342.400 107.200z" fill="#1da462"/><path d="M1335 107.200L1338.700 113.600A7.400 7.400 0 0 0 1341.400 103.500L1335 103.500z" fill="#ffd04b"/><path d="M1338.700 113.600L1335 107.200L1331.300 113.600A7.400 7.400 0 0 0 1338.700 113.600z" fill="#ffd04b" opacity="0"/><circle cx="1335" cy="107.200" r="3.400" fill="#fff"/><circle cx="1335" cy="107.200" r="2.700" fill="#4a8af4"/><rect x="1329" y="130" width="12" height="15.500" fill="#fff"/><rect x="1330.500" y="131.700" width="9" height="3" fill="#000" opacity=".0"/><rect x="1331" y="136" width="1.700" height="1.700" fill="#000"/><rect x="1331" y="139" width="1.700" height="1.700" fill="#000"/><rect x="1331" y="142" width="1.700" height="1.700" fill="#000"/><rect x="1334.2" y="136" width="1.700" height="1.700" fill="#000"/><rect x="1334.2" y="139" width="1.700" height="1.700" fill="#000"/><rect x="1334.2" y="142" width="1.700" height="1.700" fill="#000"/><rect x="1337.4" y="136" width="1.700" height="1.700" fill="#000"/><rect x="1337.4" y="139" width="1.700" height="1.700" fill="#000"/><rect x="1337.4" y="142" width="1.700" height="1.700" fill="#000"/><rect x="1330.700" y="131.700" width="8.600" height="2.300" fill="#000" opacity=".12"/><path d="M1327.500 168c.5-4.500 4-7.500 8-7.500 4.500 0 7 3.200 6.800 7.800h-9.500c.3 2.500 2.200 3.700 4.700 3.700 1.600 0 3.200-.5 4.500-1.300v3.700c-1.600.9-3.500 1.300-5.500 1.300-4.500 0-7.500-2.800-7.700-6.700 0-2.500 1.200-4.500 3-5.700-1.800.7-3.300 2.300-4.300 4.700zM1332.900 165.700h5.200c-.1-1.600-1-2.600-2.500-2.600s-2.500 1-2.700 2.600z" fill="#0f79d8"/><path d="M1327 193h6l1.500 1.800h8.500v11.700h-16z" fill="#f7c64f"/><path d="M1327 196.500h16v10h-16z" fill="#fbdc83"/><path d="M1330.300 206.500v-5.500h9.500v5.500h-2.600v-3h-4.300v3z" fill="#2f95dc"/><rect x="1328" y="193.800" width="2.500" height="1" fill="#3b8fd0"/><circle cx="1333" cy="228" r="5.500" fill="#1ea4e4"/><circle cx="1337.500" cy="233" r="5.300" fill="#1ea4e4"/><circle cx="1335.200" cy="230.500" r="6.600" fill="#1ea4e4"/><circle cx="1320.6" cy="441.600" r="7.600" fill="#f4f7fa" stroke="#37a9e8" stroke-width="1.300"/><rect x="1337.3" y="434" width="15.500" height="15.500" fill="#2e9d5e"/><path d="M1340.5 442l3 3 5.500-6" stroke="#fff" stroke-width="1.700" fill="none"/><rect x="1313.6" y="459" width="14" height="14" rx="3" fill="#fdfdfd"/><path d="M1316.2 469.500a2.600 2.600 0 0 1 .4-5.100 3.700 3.700 0 0 1 7-.6 2.900 2.900 0 0 1 1 5.700z" fill="#3e9df0"/><path d="M1339 458.500h11.500v10.500c0 2.500-2 4-5.700 4s-5.800-1.500-5.800-4z" fill="#fff"/><rect x="1339.5" y="459" width="5" height="5.500" fill="#8a8a8a"/><path d="M1314.1 494.500a3 3 0 0 1 .5-5.900 4.300 4.300 0 0 1 8-.8 3.400 3.400 0 0 1 1.200 6.700z" fill="#8d8d8d"/><path d="M1312.6 492.500a2.300 2.300 0 0 1 .4-4.500 3.300 3.300 0 0 1 6.100-.6z" fill="#a5a5a5"/><rect x="1337.5" y="483.500" width="14.500" height="10.500" fill="#1d4f9d"/><path d="M1339.5 492l3-5 2.500 3 2-4 2.500 6z" fill="#9cc6f2"/><path d="M1345 494v2.500M1342 496.500h6" stroke="#ccc" stroke-width="1"/><ellipse cx="1320.6" cy="513.800" rx="6.700" ry="6.200" fill="#6fb116" transform="rotate(-35 1320.6 513.800)"/><circle cx="1320.6" cy="513.800" r="3.700" fill="#8cc63f"/><path d="M1318.6 514l1.500 1.500 2.600-3" stroke="#fff" stroke-width="1.200" fill="none"/><rect x="1337.5" y="506.500" width="10" height="9" fill="#fff"/><path d="M1343.5 508.500l-2.500 3.500h2.500l-1.500 3" stroke="#2f7fe0" stroke-width="1.300" fill="none"/><path d="M1338.5 517.500h8M1342.5 516v2" stroke="#ddd" stroke-width="1"/><path d="M1346.5 514.500l6 6m0-6l-6 6" stroke="#ef1c24" stroke-width="1.800"/><circle cx="1320.6" cy="537.700" r="7.600" fill="#d52a2e"/><path d="M1315.6 537.700h3M1323.6 537.700h-3M1319.8 533v3M1319.8 542.500v-3" stroke="#fff" stroke-width="1.300"/><path d="M1323.1 532.500l2.500 2.500m0-2.500l-2.500 2.500" stroke="#fff" stroke-width="1"/><rect x="1337.8" y="530.500" width="14.500" height="14.500" rx="5" fill="#f4fbfb" stroke="#15868f" stroke-width="1.600"/><path d="M1315.6 556h9.500M1313.6 566h5" stroke="#3d8fe6" stroke-width="2.600"/><circle cx="1325.1" cy="566" r="3.300" fill="#f2f2f2"/><path d="M1318.6 558.500c3 0 5 1.500 5.500 4" stroke="#3d8fe6" stroke-width="1.600" fill="none"/><rect x="1338.5" y="555.500" width="13" height="9.500" fill="#8c8c8c"/><path d="M1338.5 567.500h4M1346.5 567.500h4" stroke="#9a9a9a" stroke-width="1.600"/><rect x="1312.9" y="578" width="15.500" height="15" fill="#2a3440"/><rect x="1313.9" y="580.500" width="13.500" height="10" fill="#77b61a"/><ellipse cx="1320.1" cy="585.500" rx="4" ry="2.600" fill="none" stroke="#2a3440" stroke-width="1"/><path d="M1337.5 583h2.500l3.500-3.300v11.600l-3.500-3.300h-2.500z" fill="none" stroke="#fff" stroke-width="1.200"/><path d="M1346 582.500c1.300 1.700 1.300 4.300 0 6M1348.3 580.700c2.300 2.800 2.300 6.800 0 9.600" stroke="#fff" stroke-width="1.100" fill="none"/><path d="M1350.7 579c3 3.800 3 9.200 0 13" stroke="#777" stroke-width="1" fill="none"/><path d="M1313.1 616a10 10 0 0 1 10-10M1316.4 616a6.700 6.700 0 0 1 6.700-6.700M1319.5 616a3.600 3.600 0 0 1 3.600-3.600" stroke="#fff" stroke-width="1.500" fill="none"/><rect x="1323.6" y="613.500" width="2.800" height="2.800" fill="#fff"/><rect x="1341.5" y="605.500" width="12" height="8" fill="none" stroke="#fff" stroke-width="1.400"/><rect x="1354" y="607.800" width="1.500" height="3.400" fill="#fff"/><path d="M1337 604v3.500c0 1.500.8 2 2 2s2-.5 2-2v-3.500M1339 609.500v4" stroke="#fff" stroke-width="1.200" fill="none"/><rect x="1313.1" y="625.500" width="15" height="15" rx="1.500" fill="#e8731c"/><path d="M1316.6 636h7.500M1317.6 638h5.500" stroke="#fff" stroke-width="1.100"/><path d="M1321.1 628c-1.500 2 1.500 3-.3 5.500" stroke="#fff" stroke-width="1.100" fill="none"/><path d="M1327 649.500h15.500v12h-5.500l-2.500 2.500-2.500-2.500h-5z" fill="#fff"/><path d="M1330 653h9.500M1330 655.500h9.500M1330 658h6" stroke="#000" stroke-width="1"/><path d="M1304 763.500h62" stroke="#4a4a4a" stroke-width="1"/></svg>
<span class="t" style="left:1330.2px;top:222px;font-size:12px;line-height:15px;color:#fff;font-weight:bold;letter-spacing:-1.016px;">S</span>
<span class="t" style="left:1315.5px;top:436.5px;font-size:8.5px;line-height:10px;color:#4a5a6a;font-weight:bold;letter-spacing:0.016px;">24</span>
<span class="t" style="left:1341.5px;top:531.5px;font-size:12px;line-height:13px;color:#15868f;font-weight:bold;letter-spacing:0.312px;">e</span>
<span class="t" style="left:1324px;top:679.5px;font-size:12px;line-height:14px;color:#fff;letter-spacing:-0.510px;">РУС</span>
<span class="t" style="left:1321.6px;top:718px;font-size:12px;line-height:14px;color:#fff;letter-spacing:-0.706px;">12:10</span>
<span class="t" style="left:1308.3px;top:734.6px;font-size:12px;line-height:14px;color:#fff;letter-spacing:-0.656px;">28.07.2016</span>
</body>
</html>
